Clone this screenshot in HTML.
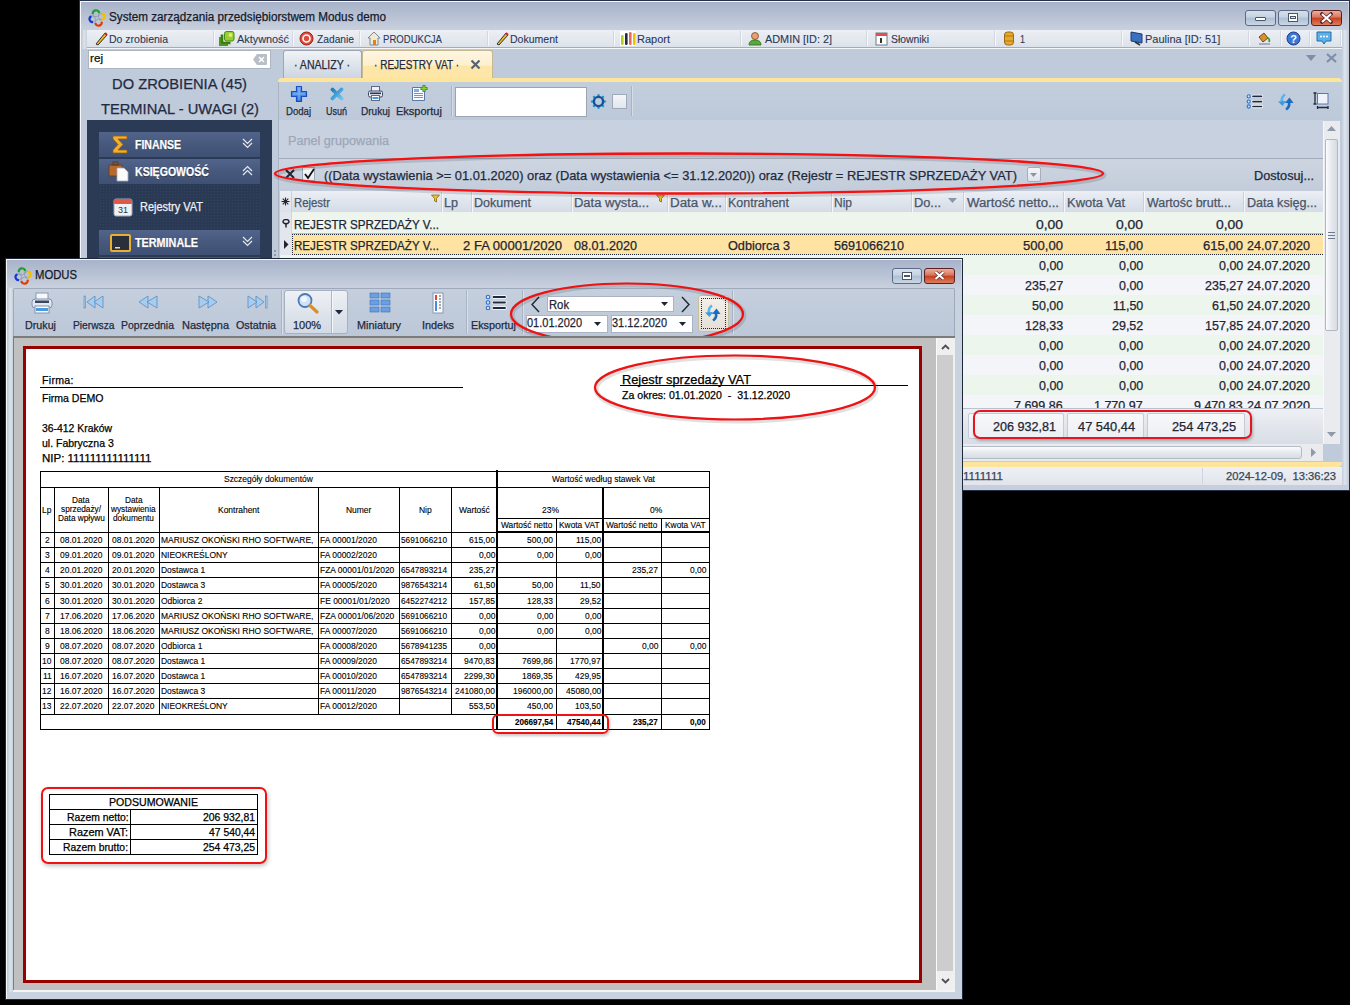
<!DOCTYPE html>
<html><head><meta charset="utf-8">
<style>
*{box-sizing:border-box;margin:0;padding:0}
html,body{width:1350px;height:1005px;overflow:hidden;background:#000}
body{position:relative;font-family:"Liberation Sans",sans-serif;color:#1e2533}
.a{position:absolute}
.t{position:absolute;white-space:pre;line-height:1;-webkit-text-stroke:0.25px currentColor}
.ui{font-size:12px;color:#1f2a3d}
.pg{font-family:"Liberation Sans",sans-serif;color:#000}
</style></head><body>
<div class="a" style="left:79px;top:0px;width:1271px;height:491px;background:#c6d0dd;border:1px solid #26304a;"></div>
<div class="a" style="left:80px;top:1px;width:1269px;height:489px;border-top:1px solid #f5f7fa;border-left:1px solid #f5f7fa;"></div>
<div class="a" style="left:81px;top:2px;width:1267px;height:28px;background:linear-gradient(#a7b2c9,#c9d1de);"></div>
<div class="a" style="left:1342px;top:30px;width:6px;height:455px;background:linear-gradient(90deg,#c5cedb,#dfe5ed 50%,#c5cedb);"></div>
<div class="a" style="left:81px;top:30px;width:6px;height:455px;background:linear-gradient(90deg,#bcc6d4,#dde3eb 55%,#c6cfdb);"></div>
<svg class="a" style="left:88px;top:8px" width="18" height="20"><circle cx="8" cy="5.5" r="3.3" fill="none" stroke="#7a8a96" stroke-width=".7" opacity=".8"/><circle cx="13.5" cy="8.5" r="3.0" fill="none" stroke="#7a8a96" stroke-width=".7" opacity=".8"/><circle cx="10.5" cy="14.5" r="3.3" fill="none" stroke="#7a8a96" stroke-width=".7" opacity=".8"/><circle cx="4.5" cy="11" r="3.0" fill="none" stroke="#7a8a96" stroke-width=".7" opacity=".8"/><path d="M4.75 6.07 A3.3 3.3 0 0 1 11.25 4.93" fill="none" stroke="#1aa030" stroke-width="2.2"/><path d="M14.02 5.55 A3.0 3.0 0 0 1 13.50 11.50" fill="none" stroke="#f2c000" stroke-width="2.2"/><path d="M13.75 13.93 A3.3 3.3 0 0 1 7.25 15.07" fill="none" stroke="#e83a00" stroke-width="2.2"/><path d="M5.02 13.95 A3.0 3.0 0 0 1 3.47 8.18" fill="none" stroke="#1438d8" stroke-width="2.2"/></svg>
<div class="t" style="left:109.00px;top:10.84px;font-size:12px;color:#15192a;font-weight:normal;transform:scaleX(0.9749);transform-origin:0 0;">System zarządzania przedsiębiorstwem Modus demo</div>
<div class="a" style="left:1245px;top:10px;width:31px;height:16px;border:1px solid #5b6b85;border-radius:3px;background:linear-gradient(#d6e0ec,#c4d2e2 45%,#aebfd4 50%,#c9d7e6);"></div>
<div class="a" style="left:1278px;top:10px;width:31px;height:16px;border:1px solid #5b6b85;border-radius:3px;background:linear-gradient(#d6e0ec,#c4d2e2 45%,#aebfd4 50%,#c9d7e6);"></div>
<div class="a" style="left:1311px;top:10px;width:31px;height:16px;border:1px solid #5a1f1f;border-radius:3px;background:linear-gradient(#eab0a0,#d9735c 45%,#c2401f 50%,#e07c5c);"></div>
<div class="a" style="left:1255px;top:17px;width:11px;height:4px;background:#fff;border:1px solid #4a5568;border-radius:1px;"></div>
<div class="a" style="left:1288px;top:13px;width:10px;height:9px;border:1px solid #4a5568;background:#fff;"></div>
<div class="a" style="left:1290px;top:16px;width:6px;height:3px;border:1px solid #4a5568;background:#dfe6ef;"></div>
<svg class="a" style="left:1320px;top:12px" width="13" height="12"><path d="M2 2 L11 10 M11 2 L2 10" stroke="#5a2a2a" stroke-width="3.6" stroke-linecap="square"/><path d="M2 2 L11 10 M11 2 L2 10" stroke="#fff" stroke-width="2.2"/></svg>
<div class="a" style="left:87px;top:30px;width:1255px;height:17px;background:linear-gradient(#eceff4,#dde2ea);"></div>
<div class="a" style="left:87px;top:47px;width:1255px;height:1px;background:#a3acb9;"></div>
<div class="a" style="left:87px;top:48px;width:1255px;height:1px;background:#f4f6f9;"></div>
<div class="a" style="left:214px;top:31px;width:1px;height:15px;background:#f7f8fa;"></div>
<div class="a" style="left:213px;top:31px;width:1px;height:15px;background:#d3d8e0;"></div>
<div class="a" style="left:293px;top:31px;width:1px;height:15px;background:#f7f8fa;"></div>
<div class="a" style="left:292px;top:31px;width:1px;height:15px;background:#d3d8e0;"></div>
<div class="a" style="left:360px;top:31px;width:1px;height:15px;background:#f7f8fa;"></div>
<div class="a" style="left:359px;top:31px;width:1px;height:15px;background:#d3d8e0;"></div>
<div class="a" style="left:488px;top:31px;width:1px;height:15px;background:#f7f8fa;"></div>
<div class="a" style="left:487px;top:31px;width:1px;height:15px;background:#d3d8e0;"></div>
<div class="a" style="left:614px;top:31px;width:1px;height:15px;background:#f7f8fa;"></div>
<div class="a" style="left:613px;top:31px;width:1px;height:15px;background:#d3d8e0;"></div>
<div class="a" style="left:741px;top:31px;width:1px;height:15px;background:#f7f8fa;"></div>
<div class="a" style="left:740px;top:31px;width:1px;height:15px;background:#d3d8e0;"></div>
<div class="a" style="left:867px;top:31px;width:1px;height:15px;background:#f7f8fa;"></div>
<div class="a" style="left:866px;top:31px;width:1px;height:15px;background:#d3d8e0;"></div>
<div class="a" style="left:995px;top:31px;width:1px;height:15px;background:#f7f8fa;"></div>
<div class="a" style="left:994px;top:31px;width:1px;height:15px;background:#d3d8e0;"></div>
<div class="a" style="left:1122px;top:31px;width:1px;height:15px;background:#f7f8fa;"></div>
<div class="a" style="left:1121px;top:31px;width:1px;height:15px;background:#d3d8e0;"></div>
<div class="a" style="left:1249px;top:31px;width:1px;height:15px;background:#f7f8fa;"></div>
<div class="a" style="left:1248px;top:31px;width:1px;height:15px;background:#d3d8e0;"></div>
<div class="a" style="left:1281px;top:31px;width:1px;height:15px;background:#f7f8fa;"></div>
<div class="a" style="left:1280px;top:31px;width:1px;height:15px;background:#d3d8e0;"></div>
<div class="a" style="left:1310px;top:31px;width:1px;height:15px;background:#f7f8fa;"></div>
<div class="a" style="left:1309px;top:31px;width:1px;height:15px;background:#d3d8e0;"></div>
<div class="a" style="left:1341px;top:31px;width:1px;height:15px;background:#f7f8fa;"></div>
<div class="a" style="left:1340px;top:31px;width:1px;height:15px;background:#d3d8e0;"></div>
<div class="t" style="left:109.00px;top:33.69px;font-size:11px;color:#2a3858;font-weight:normal;transform:scaleX(0.9554);transform-origin:0 0;-webkit-text-stroke:0.1px #2a3858;">Do zrobienia</div>
<div class="t" style="left:237.00px;top:33.69px;font-size:11px;color:#2a3858;font-weight:normal;transform:scaleX(0.9891);transform-origin:0 0;-webkit-text-stroke:0.1px #2a3858;">Aktywność</div>
<div class="t" style="left:317.00px;top:33.69px;font-size:11px;color:#2a3858;font-weight:normal;transform:scaleX(0.9309);transform-origin:0 0;-webkit-text-stroke:0.1px #2a3858;">Zadanie</div>
<div class="t" style="left:383.00px;top:33.69px;font-size:11px;color:#2a3858;font-weight:normal;transform:scaleX(0.8696);transform-origin:0 0;-webkit-text-stroke:0.1px #2a3858;">PRODUKCJA</div>
<div class="t" style="left:510.00px;top:33.69px;font-size:11px;color:#2a3858;font-weight:normal;transform:scaleX(0.9575);transform-origin:0 0;-webkit-text-stroke:0.1px #2a3858;">Dokument</div>
<div class="t" style="left:637.00px;top:33.69px;font-size:11px;color:#2a3858;font-weight:normal;-webkit-text-stroke:0.1px #2a3858;">Raport</div>
<div class="t" style="left:765.00px;top:33.69px;font-size:11px;color:#2a3858;font-weight:normal;transform:scaleX(0.9876);transform-origin:0 0;-webkit-text-stroke:0.1px #2a3858;">ADMIN [ID: 2]</div>
<div class="t" style="left:891.00px;top:33.69px;font-size:11px;color:#2a3858;font-weight:normal;transform:scaleX(0.9418);transform-origin:0 0;-webkit-text-stroke:0.1px #2a3858;">Słowniki</div>
<div class="t" style="left:1020.00px;top:33.69px;font-size:11px;color:#2a3858;font-weight:normal;transform:scaleX(0.8174);transform-origin:0 0;-webkit-text-stroke:0.1px #2a3858;">1</div>
<div class="t" style="left:1145.00px;top:33.69px;font-size:11px;color:#2a3858;font-weight:normal;-webkit-text-stroke:0.1px #2a3858;">Paulina [ID: 51]</div>
<svg class="a" style="left:94px;top:31px" width="14" height="15"><path d="M2 13 L11 2 L13 4 L4 14 Z" fill="#e8b820" stroke="#333" stroke-width="1"/><path d="M11 2 L13 4" stroke="#d02020" stroke-width="2"/></svg>
<svg class="a" style="left:495px;top:31px" width="14" height="15"><path d="M2 13 L11 2 L13 4 L4 14 Z" fill="#e8b820" stroke="#333" stroke-width="1"/><path d="M11 2 L13 4" stroke="#d02020" stroke-width="2"/></svg>
<svg class="a" style="left:219px;top:31px" width="16" height="15"><rect x="5.5" y="0.5" width="9.5" height="9.5" rx="2" fill="#9acd32" stroke="#4a8a1a"/><circle cx="11.5" cy="4" r="2" fill="#d8f070"/><path d="M3 3.5 V12 H11.5" fill="none" stroke="#3a7a12" stroke-width="2.6"/><path d="M1 6 V14 H9" fill="none" stroke="#4a9a1a" stroke-width="2.4"/></svg>
<svg class="a" style="left:299px;top:31px" width="15" height="15"><circle cx="7.5" cy="7.5" r="6.5" fill="#e04a3a" stroke="#a02010"/><circle cx="7.5" cy="7.5" r="3.5" fill="none" stroke="#fff" stroke-width="1.6"/></svg>
<svg class="a" style="left:367px;top:31px" width="14" height="15"><path d="M1 7 L7 1 L13 7 L11 7 L11 14 L3 14 L3 7 Z" fill="#f2ead0" stroke="#7a8a9a"/><rect x="6" y="9" width="3" height="5" fill="#e08020"/></svg>
<svg class="a" style="left:620px;top:31px" width="16" height="15"><rect x="0" y="0" width="16" height="15" fill="#fff"/><rect x="1" y="4" width="2.6" height="10" rx="1.2" fill="#b8cc20"/><rect x="5" y="2" width="2.6" height="12" rx="1.2" fill="#1f2a3d"/><rect x="9" y="1" width="2.6" height="13" rx="1.2" fill="#e86a5a"/><rect x="13" y="2" width="2.6" height="12" rx="1.2" fill="#f0c000"/></svg>
<svg class="a" style="left:748px;top:31px" width="14" height="15"><circle cx="7" cy="5" r="3.5" fill="#e8a070" stroke="#7a4a2a" stroke-width=".8"/><path d="M1 14 Q1 9 7 9 Q13 9 13 14 Z" fill="#5aaa3a" stroke="#2a6a1a" stroke-width=".8"/></svg>
<svg class="a" style="left:875px;top:31px" width="13" height="15"><rect x="1" y="2" width="11" height="12" fill="#fff" stroke="#6a7a8a"/><rect x="1" y="2" width="11" height="3" fill="#e05050"/><rect x="5" y="7" width="2" height="5" fill="#333"/></svg>
<svg class="a" style="left:1003px;top:31px" width="12" height="15"><rect x="1.5" y="1" width="9" height="13" rx="3" fill="#e8a830" stroke="#9a6a10"/><path d="M2 5 H10 M2 10 H10" stroke="#b07810"/></svg>
<svg class="a" style="left:1130px;top:31px" width="13" height="15"><path d="M1 1 L12 3 L12 12 L1 10 Z" fill="#3a70c0" stroke="#1a3a70"/><path d="M5 11 L10 14" stroke="#333" stroke-width="1.5"/></svg>
<svg class="a" style="left:1257px;top:30px" width="14" height="16"><path d="M2 7 L7 3 L11 8 L6 12 Z" fill="#d8902a" stroke="#7a4a10"/><path d="M11 8 Q13 9 12 12" stroke="#3aa020" stroke-width="1.8" fill="none"/><rect x="2" y="13" width="11" height="2" fill="#aab"/></svg>
<svg class="a" style="left:1286px;top:31px" width="15" height="15"><circle cx="7.5" cy="7.5" r="6.5" fill="#3a78d8" stroke="#1a3a8a"/><text x="7.5" y="11.5" font-size="11" font-weight="bold" fill="#fff" text-anchor="middle" font-family="Liberation Sans">?</text></svg>
<svg class="a" style="left:1316px;top:31px" width="16" height="15"><path d="M1 1 H15 V10 H10 L8 13 L6 10 H1 Z" fill="#5ab0e8" stroke="#2a6aa8"/><circle cx="5" cy="5.5" r="1" fill="#fff"/><circle cx="8" cy="5.5" r="1" fill="#fff"/><circle cx="11" cy="5.5" r="1" fill="#fff"/></svg>
<div class="a" style="left:81px;top:49px;width:197px;height:436px;background:#bfcada;"></div>
<div class="a" style="left:88px;top:50px;width:183px;height:19px;background:#fff;border:1px solid #abb5c4;"></div>
<div class="t" style="left:90.00px;top:53.27px;font-size:11.5px;color:#111;font-weight:normal;transform:scaleX(1.0172);transform-origin:0 0;">rej</div>
<svg class="a" style="left:252px;top:53px" width="16" height="13"><path d="M5 1 H14 Q15 1 15 2 V11 Q15 12 14 12 H5 L1 6.5 Z" fill="#b8bec8"/><path d="M7 4 L12 9 M12 4 L7 9" stroke="#fff" stroke-width="1.5"/></svg>
<div class="t" style="left:112.00px;top:76.30px;font-size:15px;color:#1f2a44;font-weight:normal;transform:scaleX(0.9816);transform-origin:0 0;">DO ZROBIENIA (45)</div>
<div class="t" style="left:101.00px;top:101.30px;font-size:15px;color:#1f2a44;font-weight:normal;transform:scaleX(0.9790);transform-origin:0 0;">TERMINAL - UWAGI (2)</div>
<div class="a" style="left:87px;top:120px;width:185px;height:140px;background:#2b3a55;"></div>
<div class="a" style="left:99px;top:132px;width:161px;height:25px;background:linear-gradient(#52648a,#46587c 50%,#3e5073);"></div>
<div class="t" style="left:135.00px;top:138.84px;font-size:12px;color:#ffffff;font-weight:bold;transform:scaleX(0.8734);transform-origin:0 0;text-shadow:0 1px 0 #1a2236;">FINANSE</div>
<div class="a" style="left:99px;top:159px;width:161px;height:25px;background:linear-gradient(#52648a,#46587c 50%,#3e5073);"></div>
<div class="t" style="left:135.00px;top:165.84px;font-size:12px;color:#ffffff;font-weight:bold;transform:scaleX(0.8809);transform-origin:0 0;text-shadow:0 1px 0 #1a2236;">KSIĘGOWOŚĆ</div>
<div class="a" style="left:99px;top:230px;width:161px;height:25px;background:linear-gradient(#52648a,#46587c 50%,#3e5073);"></div>
<div class="t" style="left:135.00px;top:236.84px;font-size:12px;color:#ffffff;font-weight:bold;transform:scaleX(0.9000);transform-origin:0 0;text-shadow:0 1px 0 #1a2236;">TERMINALE</div>
<div class="a" style="left:99px;top:257px;width:161px;height:3px;background:#44567a;"></div>
<svg class="a" style="left:242px;top:138px" width="11" height="11"><path d="M1 1 L5.5 5.5 L10 1 M1 5 L5.5 9.5 L10 5" fill="none" stroke="#e4e9f1" stroke-width="1.2"/></svg>
<svg class="a" style="left:242px;top:165px" width="11" height="11"><path d="M1 6 L5.5 1.5 L10 6 M1 10 L5.5 5.5 L10 10" fill="none" stroke="#e4e9f1" stroke-width="1.2"/></svg>
<svg class="a" style="left:242px;top:236px" width="11" height="11"><path d="M1 1 L5.5 5.5 L10 1 M1 5 L5.5 9.5 L10 5" fill="none" stroke="#e4e9f1" stroke-width="1.2"/></svg>
<svg class="a" style="left:111px;top:134px" width="18" height="21"><path d="M2 2 H16 V5 H7 L12 10.5 L7 16 H16 V19 H2 V16 L7 10.5 L2 5 Z" fill="#f0b030" stroke="#9a6010" stroke-width=".8"/></svg>
<svg class="a" style="left:108px;top:160px" width="22" height="22"><rect x="1" y="5" width="13" height="11" rx="1" fill="#b86a2a" stroke="#6a3a10" stroke-width=".8"/><rect x="5" y="2" width="5" height="3" fill="none" stroke="#6a3a10"/><path d="M9 8 H16 L20 12 V21 H9 Z" fill="#fafafa" stroke="#aab" stroke-width=".8"/></svg>
<div class="a" style="left:99px;top:184px;width:161px;height:45px;background-color:#2a3954;background-image:radial-gradient(#34445f 0.6px,transparent 0.8px);background-size:3px 3px;"></div>
<svg class="a" style="left:113px;top:196px" width="20" height="21"><rect x="1" y="3" width="18" height="17" rx="2" fill="#eef2f7" stroke="#9aa8bc"/><rect x="1" y="3" width="18" height="5" rx="1" fill="#e05a4a"/><text x="10" y="17" font-size="9" font-family="Liberation Sans" fill="#333" text-anchor="middle">31</text></svg>
<div class="t" style="left:140.00px;top:200.84px;font-size:12px;color:#eef1f6;font-weight:normal;transform:scaleX(0.9143);transform-origin:0 0;">Rejestry VAT</div>
<svg class="a" style="left:110px;top:234px" width="21" height="19"><rect x="1" y="1" width="19" height="16" rx="1" fill="#2a2f3a" stroke="#e8b030" stroke-width="2"/><rect x="5" y="13" width="5" height="1.5" fill="#ddd"/></svg>
<div class="a" style="left:274px;top:250px;width:2px;height:2px;background:#8d99ab;"></div>
<div class="a" style="left:274px;top:254px;width:2px;height:2px;background:#8d99ab;"></div>
<div class="a" style="left:278px;top:49px;width:1064px;height:436px;background:#bfcadb;"></div>
<div class="a" style="left:283px;top:50px;width:79px;height:28px;border:1px solid #9ba6b6;border-bottom:none;border-radius:3px 3px 0 0;background:linear-gradient(#f0f3f7,#dde3eb 55%,#cdd5e1);"></div>
<div class="t" style="left:294.00px;top:58.84px;font-size:12px;color:#1f2a3d;font-weight:normal;transform:scaleX(0.8777);transform-origin:0 0;">· ANALIZY ·</div>
<div class="a" style="left:362px;top:50px;width:131px;height:29px;border:1px solid #c8b890;border-bottom:none;border-radius:3px 3px 0 0;background:linear-gradient(#fdf6e2,#fdf0cf 50%,#fde6a8 55%,#fde6a8);"></div>
<div class="t" style="left:374.00px;top:58.84px;font-size:12px;color:#1f2a3d;font-weight:normal;transform:scaleX(0.8368);transform-origin:0 0;">· REJESTRY VAT ·</div>
<svg class="a" style="left:470px;top:59px" width="11" height="11"><path d="M1.5 1.5 L9.5 9.5 M9.5 1.5 L1.5 9.5" stroke="#5a6270" stroke-width="2.2"/></svg>
<svg class="a" style="left:1306px;top:55px" width="11" height="7"><path d="M0 0 H10 L5 6 Z" fill="#7f8da6"/></svg>
<svg class="a" style="left:1326px;top:53px" width="11" height="10"><path d="M1 1 L10 9 M10 1 L1 9" stroke="#7f8da6" stroke-width="2.2"/></svg>
<div class="a" style="left:278px;top:78px;width:1064px;height:5px;background:#fde59b;border-radius:4px 4px 0 0;"></div>
<div class="a" style="left:278px;top:462px;width:1064px;height:5px;background:#fde59b;border-radius:0 0 4px 4px;"></div>
<div class="a" style="left:278px;top:82px;width:1064px;height:38px;background:linear-gradient(#c3cedd,#bdc8d9);"></div>
<div class="a" style="left:278px;top:82px;width:1px;height:380px;background:#aab4c3;"></div>
<svg class="a" style="left:290px;top:85px" width="18" height="18"><defs><linearGradient id="gp" x1="0" y1="0" x2="0" y2="1"><stop offset="0" stop-color="#6aaaf0"/><stop offset="1" stop-color="#2f6fd8"/></linearGradient></defs><path d="M6.5 1.5 H11.5 V6.5 H16.5 V11.5 H11.5 V16.5 H6.5 V11.5 H1.5 V6.5 H6.5 Z" fill="url(#gp)" stroke="#1a4ec0" stroke-width="1.2" stroke-linejoin="round"/><path d="M9 3 V15 M3 9 H15" stroke="#9fd0ff" stroke-width="1" opacity=".7"/></svg>
<svg class="a" style="left:330px;top:87px" width="14" height="14"><defs><linearGradient id="gx" x1="0" y1="0" x2="1" y2="1"><stop offset="0" stop-color="#1f7fc0"/><stop offset="1" stop-color="#6cc4f0"/></linearGradient></defs><path d="M2.5 2.5 L11.5 11.5 M11.5 2.5 L2.5 11.5" stroke="url(#gx)" stroke-width="3.8" stroke-linecap="round"/></svg>
<svg class="a" style="left:368px;top:86px" width="15" height="15"><rect x="3.5" y="0.5" width="8" height="5" fill="#eef2f8" stroke="#5a6a88"/><rect x="0.5" y="5" width="14" height="6" rx="1.5" fill="#e6ebf2" stroke="#3a4866"/><rect x="2" y="6.5" width="11" height="1.6" fill="#2a3550"/><rect x="3.5" y="9.5" width="8" height="5" fill="#fff" stroke="#5a6a88"/><rect x="4.5" y="11" width="6" height="2" fill="#4a9ae0"/></svg>
<svg class="a" style="left:411px;top:84px" width="18" height="18"><path d="M1.5 3.5 H11 L13.5 6 V16.5 H1.5 Z" fill="#fafcff" stroke="#5a78a8"/><rect x="3" y="5" width="5" height="3" fill="#7ab0e8"/><path d="M3 9.5 H12 M3 11.5 H12 M3 13.5 H12" stroke="#6a88b8" stroke-width=".9"/><path d="M13 1 V8 M9.5 4.5 H16.5" stroke="#3a8a20" stroke-width="3"/><path d="M13 1.8 V7.2 M10.3 4.5 H15.7" stroke="#8ad040" stroke-width="1.4"/></svg>
<div class="t" style="left:286.00px;top:105.69px;font-size:11px;color:#1f2a3d;font-weight:normal;transform:scaleX(0.8699);transform-origin:0 0;">Dodaj</div>
<div class="t" style="left:326.00px;top:105.69px;font-size:11px;color:#1f2a3d;font-weight:normal;transform:scaleX(0.8178);transform-origin:0 0;">Usuń</div>
<div class="t" style="left:361.00px;top:105.69px;font-size:11px;color:#1f2a3d;font-weight:normal;transform:scaleX(0.9124);transform-origin:0 0;">Drukuj</div>
<div class="t" style="left:396.00px;top:105.69px;font-size:11px;color:#1f2a3d;font-weight:normal;">Eksportuj</div>
<div class="a" style="left:451px;top:86px;width:1px;height:30px;background:#a8b3c3;"></div>
<div class="a" style="left:452px;top:86px;width:1px;height:30px;background:#d6dde7;"></div>
<div class="a" style="left:455px;top:87px;width:132px;height:30px;background:#fff;border:1px solid #9aa4b3;"></div>
<svg class="a" style="left:590px;top:93px" width="17" height="17"><g fill="#1f9fd0"><circle cx="14.80" cy="8.50" r="1.3"/><circle cx="12.95" cy="12.95" r="1.3"/><circle cx="8.50" cy="14.80" r="1.3"/><circle cx="4.05" cy="12.95" r="1.3"/><circle cx="2.20" cy="8.50" r="1.3"/><circle cx="4.05" cy="4.05" r="1.3"/><circle cx="8.50" cy="2.20" r="1.3"/><circle cx="12.95" cy="4.05" r="1.3"/></g><circle cx="8.5" cy="8.5" r="4.6" fill="none" stroke="#1a4f9a" stroke-width="2.4"/></svg>
<div class="a" style="left:612px;top:94px;width:15px;height:15px;background:linear-gradient(#f4f6f9,#e1e6ee);border:1px solid #a0a9b8;"></div>
<div class="a" style="left:631px;top:86px;width:1px;height:30px;background:#a8b3c3;"></div>
<div class="a" style="left:632px;top:86px;width:1px;height:30px;background:#d6dde7;"></div>
<svg class="a" style="left:1244px;top:92px" width="20" height="18"><g stroke="#fff" stroke-width="3.4" stroke-linecap="round"><path d="M9 4.4 H17.5 M9 9.6 H17.5 M9 14.5 H17.5"/></g><g stroke="#1f2a3d" stroke-width="1.7" stroke-linecap="round"><path d="M9 4.4 H17.5 M9 9.6 H17.5 M9 14.5 H17.5"/></g><g fill="#cfe3f8" stroke="#2f6fc8" stroke-width="1.1"><circle cx="4.7" cy="4.4" r="1.6"/><circle cx="4.7" cy="9.6" r="1.6"/><circle cx="4.7" cy="14.5" r="1.6"/></g></svg>
<svg class="a" style="left:1277px;top:93px" width="18" height="18"><path d="M8 1.5 Q4 4 5 9" fill="none" stroke="#5ab4ee" stroke-width="2.6"/><path d="M1 8.5 L9 8 L5.5 13 Z" fill="#3a9ae6"/><path d="M9 16.5 Q13 14 12 9" fill="none" stroke="#1a6ac4" stroke-width="2.6"/><path d="M8 10 L12.5 4.5 L16.5 10 Z" fill="#1a6ac4"/></svg>
<svg class="a" style="left:1312px;top:92px" width="18" height="18"><path d="M1.5 1 H4.5 M3 1 V12 M1.5 12 H4.5" stroke="#1f2a3d" stroke-width="1.3"/><rect x="5.5" y="1.5" width="10.5" height="10.5" fill="#eef3fb" stroke="#5a78b8" stroke-width="1"/><path d="M5.5 15.5 H16 M5.5 14 V17 M16 14 V17" stroke="#1f2a3d" stroke-width="1.3"/></svg>
<div class="a" style="left:279px;top:120px;width:1044px;height:38px;background:#c8d1df;"></div>
<div class="t" style="left:288.00px;top:134.84px;font-size:12px;color:#9ca7b9;font-weight:normal;transform:scaleX(1.0513);transform-origin:0 0;">Panel grupowania</div>
<div class="a" style="left:279px;top:158px;width:1044px;height:1px;background:#9fa9b8;"></div>
<div class="a" style="left:279px;top:159px;width:1044px;height:32px;background:linear-gradient(#cdd5e1,#c3ccda);"></div>
<svg class="a" style="left:285px;top:169px" width="10" height="10"><path d="M1 1 L9 9 M9 1 L1 9" stroke="#1f2533" stroke-width="2"/></svg>
<div class="a" style="left:302px;top:167px;width:13px;height:14px;background:linear-gradient(#fafbfc,#e4e8ee);border:1px solid #9da6b4;"></div>
<svg class="a" style="left:303px;top:168px" width="12" height="12"><path d="M2 6 L5 10 L11 1" fill="none" stroke="#111" stroke-width="1.8"/></svg>
<div class="t" style="left:324.00px;top:169.00px;font-size:13px;color:#1f2a3d;font-weight:normal;transform:scaleX(0.9893);transform-origin:0 0;">((Data wystawienia &gt;= 01.01.2020) oraz (Data wystawienia &lt;= 31.12.2020)) oraz (Rejestr = REJESTR SPRZEDAŻY VAT)</div>
<div class="a" style="left:1027px;top:167px;width:14px;height:15px;background:linear-gradient(#f3f5f8,#dfe4eb);border:1px solid #a6aebb;border-radius:2px;"></div>
<svg class="a" style="left:1030px;top:173px" width="8" height="5"><path d="M0 0 H7 L3.5 4 Z" fill="#8a94a4"/></svg>
<div class="t" style="left:1254.00px;top:169.84px;font-size:12px;color:#1f2a3d;font-weight:normal;transform:scaleX(1.0584);transform-origin:0 0;">Dostosuj...</div>
<div class="a" style="left:280px;top:191px;width:1043px;height:21px;background:linear-gradient(#eceff4,#dfe5ed 50%,#d5dce7);"></div>
<div class="a" style="left:280px;top:191px;width:11px;height:21px;background:linear-gradient(#eceff3,#dde2ea);"></div>
<div class="a" style="left:291px;top:191px;width:1px;height:21px;background:#c9d0db;"></div>
<svg class="a" style="left:281px;top:197px" width="9" height="9"><path d="M4.5 0.5 V8.5 M0.5 4.5 H8.5 M1.7 1.7 L7.3 7.3 M7.3 1.7 L1.7 7.3" stroke="#1f2533" stroke-width="1.1"/></svg>
<div class="a" style="left:442px;top:192px;width:1px;height:20px;background:#f5f7fa;"></div>
<div class="a" style="left:441px;top:192px;width:1px;height:20px;background:#c8d0dc;"></div>
<div class="a" style="left:472px;top:192px;width:1px;height:20px;background:#f5f7fa;"></div>
<div class="a" style="left:471px;top:192px;width:1px;height:20px;background:#c8d0dc;"></div>
<div class="a" style="left:572px;top:192px;width:1px;height:20px;background:#f5f7fa;"></div>
<div class="a" style="left:571px;top:192px;width:1px;height:20px;background:#c8d0dc;"></div>
<div class="a" style="left:668px;top:192px;width:1px;height:20px;background:#f5f7fa;"></div>
<div class="a" style="left:667px;top:192px;width:1px;height:20px;background:#c8d0dc;"></div>
<div class="a" style="left:726px;top:192px;width:1px;height:20px;background:#f5f7fa;"></div>
<div class="a" style="left:725px;top:192px;width:1px;height:20px;background:#c8d0dc;"></div>
<div class="a" style="left:832px;top:192px;width:1px;height:20px;background:#f5f7fa;"></div>
<div class="a" style="left:831px;top:192px;width:1px;height:20px;background:#c8d0dc;"></div>
<div class="a" style="left:912px;top:192px;width:1px;height:20px;background:#f5f7fa;"></div>
<div class="a" style="left:911px;top:192px;width:1px;height:20px;background:#c8d0dc;"></div>
<div class="a" style="left:964px;top:192px;width:1px;height:20px;background:#f5f7fa;"></div>
<div class="a" style="left:963px;top:192px;width:1px;height:20px;background:#c8d0dc;"></div>
<div class="a" style="left:1064px;top:192px;width:1px;height:20px;background:#f5f7fa;"></div>
<div class="a" style="left:1063px;top:192px;width:1px;height:20px;background:#c8d0dc;"></div>
<div class="a" style="left:1144px;top:192px;width:1px;height:20px;background:#f5f7fa;"></div>
<div class="a" style="left:1143px;top:192px;width:1px;height:20px;background:#c8d0dc;"></div>
<div class="a" style="left:1244px;top:192px;width:1px;height:20px;background:#f5f7fa;"></div>
<div class="a" style="left:1243px;top:192px;width:1px;height:20px;background:#c8d0dc;"></div>
<div class="t" style="left:294.00px;top:196.84px;font-size:12px;color:#4a5568;font-weight:normal;transform:scaleX(0.9471);transform-origin:0 0;">Rejestr</div>
<div class="t" style="left:444.00px;top:196.84px;font-size:12px;color:#4a5568;font-weight:normal;transform:scaleX(1.0489);transform-origin:0 0;">Lp</div>
<div class="t" style="left:474.00px;top:196.84px;font-size:12px;color:#4a5568;font-weight:normal;transform:scaleX(1.0422);transform-origin:0 0;">Dokument</div>
<div class="t" style="left:574.00px;top:196.84px;font-size:12px;color:#4a5568;font-weight:normal;transform:scaleX(1.0813);transform-origin:0 0;">Data wysta...</div>
<div class="t" style="left:670.00px;top:196.84px;font-size:12px;color:#4a5568;font-weight:normal;transform:scaleX(1.1138);transform-origin:0 0;">Data w...</div>
<div class="t" style="left:728.00px;top:196.84px;font-size:12px;color:#4a5568;font-weight:normal;transform:scaleX(1.0390);transform-origin:0 0;">Kontrahent</div>
<div class="t" style="left:834.00px;top:196.84px;font-size:12px;color:#4a5568;font-weight:normal;">Nip</div>
<div class="t" style="left:914.00px;top:196.84px;font-size:12px;color:#4a5568;font-weight:normal;transform:scaleX(1.0654);transform-origin:0 0;">Do...</div>
<div class="t" style="left:967.00px;top:196.84px;font-size:12px;color:#4a5568;font-weight:normal;transform:scaleX(1.1007);transform-origin:0 0;">Wartość netto...</div>
<div class="t" style="left:1067.00px;top:196.84px;font-size:12px;color:#4a5568;font-weight:normal;transform:scaleX(1.0779);transform-origin:0 0;">Kwota Vat</div>
<div class="t" style="left:1147.00px;top:196.84px;font-size:12px;color:#4a5568;font-weight:normal;transform:scaleX(1.0382);transform-origin:0 0;">Wartośc brutt...</div>
<div class="t" style="left:1247.00px;top:196.84px;font-size:12px;color:#4a5568;font-weight:normal;transform:scaleX(1.0495);transform-origin:0 0;">Data księg...</div>
<svg class="a" style="left:431px;top:194px" width="9" height="9"><path d="M0.5 1 H8.5 L5.5 4.5 V8 L3.5 7 V4.5 Z" fill="#e8c030" stroke="#8a6a10" stroke-width=".8"/></svg>
<svg class="a" style="left:656px;top:194px" width="9" height="9"><path d="M0.5 1 H8.5 L5.5 4.5 V8 L3.5 7 V4.5 Z" fill="#e8c030" stroke="#8a6a10" stroke-width=".8"/></svg>
<svg class="a" style="left:948px;top:198px" width="10" height="6"><path d="M0 0 H9 L4.5 5 Z" fill="#8a96a8"/></svg>
<div class="a" style="left:280px;top:212px;width:1043px;height:22px;background:#edf5ec;"></div>
<div class="a" style="left:280px;top:212px;width:11px;height:22px;background:#e3e7ed;"></div>
<div class="a" style="left:291px;top:212px;width:1px;height:43px;background:#d0d6df;"></div>
<div class="a" style="left:292px;top:233px;width:1031px;height:1px;background:#b8c0cc;"></div>
<svg class="a" style="left:282px;top:219px" width="8" height="9"><ellipse cx="4" cy="2.6" rx="3" ry="2.1" fill="none" stroke="#1f2533" stroke-width="1.4"/><path d="M4 4.5 V8.5" stroke="#1f2533" stroke-width="1.5"/></svg>
<div class="t" style="left:294.00px;top:218.84px;font-size:12px;color:#1f2533;font-weight:normal;transform:scaleX(0.9664);transform-origin:0 0;">REJESTR SPRZEDAŻY V...</div>
<div class="t" style="left:1036.00px;top:218.84px;font-size:12px;color:#1f2533;font-weight:normal;transform:scaleX(1.1561);transform-origin:0 0;">0,00</div>
<div class="t" style="left:1116.00px;top:218.84px;font-size:12px;color:#1f2533;font-weight:normal;transform:scaleX(1.1561);transform-origin:0 0;">0,00</div>
<div class="t" style="left:1216.00px;top:218.84px;font-size:12px;color:#1f2533;font-weight:normal;transform:scaleX(1.1561);transform-origin:0 0;">0,00</div>
<div class="a" style="left:280px;top:234px;width:1043px;height:21px;background:#fee3a3;"></div>
<div class="a" style="left:280px;top:234px;width:11px;height:21px;background:#e3e7ed;"></div>
<div class="a" style="left:292px;top:234px;width:1031px;height:1px;background-image:linear-gradient(90deg,#1f2533 50%,transparent 50%);background-size:2px 1px;"></div>
<div class="a" style="left:292px;top:254px;width:1031px;height:1px;background-image:linear-gradient(90deg,#1f2533 50%,transparent 50%);background-size:2px 1px;"></div>
<div class="a" style="left:292px;top:234px;width:1px;height:21px;background-image:linear-gradient(#1f2533 50%,transparent 50%);background-size:1px 2px;"></div>
<svg class="a" style="left:284px;top:240px" width="5" height="9"><path d="M0 0 L4.5 4.5 L0 9 Z" fill="#1f2533"/></svg>
<div class="t" style="left:294.00px;top:239.84px;font-size:12px;color:#1f2533;font-weight:normal;transform:scaleX(0.9664);transform-origin:0 0;">REJESTR SPRZEDAŻY V...</div>
<div class="t" style="left:463.00px;top:239.84px;font-size:12px;color:#1f2533;font-weight:normal;transform:scaleX(1.0909);transform-origin:0 0;">2 FA 00001/2020</div>
<div class="t" style="left:574.00px;top:239.84px;font-size:12px;color:#1f2533;font-weight:normal;transform:scaleX(1.0490);transform-origin:0 0;">08.01.2020</div>
<div class="t" style="left:728.00px;top:239.84px;font-size:12px;color:#1f2533;font-weight:normal;transform:scaleX(1.0562);transform-origin:0 0;">Odbiorca 3</div>
<div class="t" style="left:834.00px;top:239.84px;font-size:12px;color:#1f2533;font-weight:normal;transform:scaleX(1.0489);transform-origin:0 0;">5691066210</div>
<div class="t" style="left:1023.00px;top:239.84px;font-size:12px;color:#1f2533;font-weight:normal;transform:scaleX(1.0899);transform-origin:0 0;">500,00</div>
<div class="t" style="left:1105.00px;top:239.84px;font-size:12px;color:#1f2533;font-weight:normal;transform:scaleX(1.0611);transform-origin:0 0;">115,00</div>
<div class="t" style="left:1203.00px;top:239.84px;font-size:12px;color:#1f2533;font-weight:normal;transform:scaleX(1.0899);transform-origin:0 0;">615,00</div>
<div class="t" style="left:1247.00px;top:239.84px;font-size:12px;color:#1f2533;font-weight:normal;transform:scaleX(1.0490);transform-origin:0 0;">24.07.2020</div>
<div class="a" style="left:280px;top:255px;width:1043px;height:20px;background:#edf6ec;"></div>
<div class="t" style="left:1038.71px;top:259.84px;font-size:12px;color:#1f2533;font-weight:normal;transform:scaleX(1.0400);transform-origin:0 0;">0,00</div>
<div class="t" style="left:1118.71px;top:259.84px;font-size:12px;color:#1f2533;font-weight:normal;transform:scaleX(1.0400);transform-origin:0 0;">0,00</div>
<div class="t" style="left:1218.71px;top:259.84px;font-size:12px;color:#1f2533;font-weight:normal;transform:scaleX(1.0400);transform-origin:0 0;">0,00</div>
<div class="t" style="left:1247.00px;top:259.84px;font-size:12px;color:#1f2533;font-weight:normal;transform:scaleX(1.0490);transform-origin:0 0;">24.07.2020</div>
<div class="a" style="left:280px;top:275px;width:1043px;height:20px;background:#f4f5f8;"></div>
<div class="t" style="left:1024.83px;top:279.84px;font-size:12px;color:#1f2533;font-weight:normal;transform:scaleX(1.0400);transform-origin:0 0;">235,27</div>
<div class="t" style="left:1118.71px;top:279.84px;font-size:12px;color:#1f2533;font-weight:normal;transform:scaleX(1.0400);transform-origin:0 0;">0,00</div>
<div class="t" style="left:1204.83px;top:279.84px;font-size:12px;color:#1f2533;font-weight:normal;transform:scaleX(1.0400);transform-origin:0 0;">235,27</div>
<div class="t" style="left:1247.00px;top:279.84px;font-size:12px;color:#1f2533;font-weight:normal;transform:scaleX(1.0490);transform-origin:0 0;">24.07.2020</div>
<div class="a" style="left:280px;top:295px;width:1043px;height:20px;background:#edf6ec;"></div>
<div class="t" style="left:1031.77px;top:299.84px;font-size:12px;color:#1f2533;font-weight:normal;transform:scaleX(1.0400);transform-origin:0 0;">50,00</div>
<div class="t" style="left:1112.70px;top:299.84px;font-size:12px;color:#1f2533;font-weight:normal;transform:scaleX(1.0400);transform-origin:0 0;">11,50</div>
<div class="t" style="left:1211.77px;top:299.84px;font-size:12px;color:#1f2533;font-weight:normal;transform:scaleX(1.0400);transform-origin:0 0;">61,50</div>
<div class="t" style="left:1247.00px;top:299.84px;font-size:12px;color:#1f2533;font-weight:normal;transform:scaleX(1.0490);transform-origin:0 0;">24.07.2020</div>
<div class="a" style="left:280px;top:315px;width:1043px;height:20px;background:#f4f5f8;"></div>
<div class="t" style="left:1024.83px;top:319.84px;font-size:12px;color:#1f2533;font-weight:normal;transform:scaleX(1.0400);transform-origin:0 0;">128,33</div>
<div class="t" style="left:1111.77px;top:319.84px;font-size:12px;color:#1f2533;font-weight:normal;transform:scaleX(1.0400);transform-origin:0 0;">29,52</div>
<div class="t" style="left:1204.83px;top:319.84px;font-size:12px;color:#1f2533;font-weight:normal;transform:scaleX(1.0400);transform-origin:0 0;">157,85</div>
<div class="t" style="left:1247.00px;top:319.84px;font-size:12px;color:#1f2533;font-weight:normal;transform:scaleX(1.0490);transform-origin:0 0;">24.07.2020</div>
<div class="a" style="left:280px;top:335px;width:1043px;height:20px;background:#edf6ec;"></div>
<div class="t" style="left:1038.71px;top:339.84px;font-size:12px;color:#1f2533;font-weight:normal;transform:scaleX(1.0400);transform-origin:0 0;">0,00</div>
<div class="t" style="left:1118.71px;top:339.84px;font-size:12px;color:#1f2533;font-weight:normal;transform:scaleX(1.0400);transform-origin:0 0;">0,00</div>
<div class="t" style="left:1218.71px;top:339.84px;font-size:12px;color:#1f2533;font-weight:normal;transform:scaleX(1.0400);transform-origin:0 0;">0,00</div>
<div class="t" style="left:1247.00px;top:339.84px;font-size:12px;color:#1f2533;font-weight:normal;transform:scaleX(1.0490);transform-origin:0 0;">24.07.2020</div>
<div class="a" style="left:280px;top:355px;width:1043px;height:20px;background:#f4f5f8;"></div>
<div class="t" style="left:1038.71px;top:359.84px;font-size:12px;color:#1f2533;font-weight:normal;transform:scaleX(1.0400);transform-origin:0 0;">0,00</div>
<div class="t" style="left:1118.71px;top:359.84px;font-size:12px;color:#1f2533;font-weight:normal;transform:scaleX(1.0400);transform-origin:0 0;">0,00</div>
<div class="t" style="left:1218.71px;top:359.84px;font-size:12px;color:#1f2533;font-weight:normal;transform:scaleX(1.0400);transform-origin:0 0;">0,00</div>
<div class="t" style="left:1247.00px;top:359.84px;font-size:12px;color:#1f2533;font-weight:normal;transform:scaleX(1.0490);transform-origin:0 0;">24.07.2020</div>
<div class="a" style="left:280px;top:375px;width:1043px;height:20px;background:#edf6ec;"></div>
<div class="t" style="left:1038.71px;top:379.84px;font-size:12px;color:#1f2533;font-weight:normal;transform:scaleX(1.0400);transform-origin:0 0;">0,00</div>
<div class="t" style="left:1118.71px;top:379.84px;font-size:12px;color:#1f2533;font-weight:normal;transform:scaleX(1.0400);transform-origin:0 0;">0,00</div>
<div class="t" style="left:1218.71px;top:379.84px;font-size:12px;color:#1f2533;font-weight:normal;transform:scaleX(1.0400);transform-origin:0 0;">0,00</div>
<div class="t" style="left:1247.00px;top:379.84px;font-size:12px;color:#1f2533;font-weight:normal;transform:scaleX(1.0490);transform-origin:0 0;">24.07.2020</div>
<div class="a" style="left:280px;top:395px;width:1043px;height:13px;background:#f4f5f8;"></div>
<div class="t" style="left:1014.42px;top:399.84px;font-size:12px;color:#1f2533;font-weight:normal;transform:scaleX(1.0400);transform-origin:0 0;">7 699,86</div>
<div class="t" style="left:1094.42px;top:399.84px;font-size:12px;color:#1f2533;font-weight:normal;transform:scaleX(1.0400);transform-origin:0 0;">1 770,97</div>
<div class="t" style="left:1194.42px;top:399.84px;font-size:12px;color:#1f2533;font-weight:normal;transform:scaleX(1.0400);transform-origin:0 0;">9 470,83</div>
<div class="t" style="left:1247.00px;top:399.84px;font-size:12px;color:#1f2533;font-weight:normal;transform:scaleX(1.0490);transform-origin:0 0;">24.07.2020</div>
<div class="a" style="left:280px;top:408px;width:1043px;height:36px;background:linear-gradient(#eef0f4,#e2e6ec 50%,#d9dee6);border-top:1px solid #b9c2cf;"></div>
<div class="a" style="left:968px;top:413px;width:96px;height:26px;background:linear-gradient(#f7f8fa,#eceff3);border:1px solid #c4cbd6;border-radius:2px;"></div>
<div class="a" style="left:1067px;top:413px;width:77px;height:26px;background:linear-gradient(#f7f8fa,#eceff3);border:1px solid #c4cbd6;border-radius:2px;"></div>
<div class="a" style="left:1147px;top:413px;width:98px;height:26px;background:linear-gradient(#f7f8fa,#eceff3);border:1px solid #c4cbd6;border-radius:2px;"></div>
<div class="t" style="left:993.00px;top:420.84px;font-size:12px;color:#1f2533;font-weight:normal;transform:scaleX(1.0490);transform-origin:0 0;">206 932,81</div>
<div class="t" style="left:1078.00px;top:420.84px;font-size:12px;color:#1f2533;font-weight:normal;transform:scaleX(1.0678);transform-origin:0 0;">47 540,44</div>
<div class="t" style="left:1172.00px;top:420.84px;font-size:12px;color:#1f2533;font-weight:normal;transform:scaleX(1.0657);transform-origin:0 0;">254 473,25</div>
<div class="a" style="left:973px;top:410px;width:279px;height:29px;border:2px solid #e8141e;border-radius:7px;box-shadow:1px 2px 3px rgba(0,0,0,.25);"></div>
<svg class="a" style="left:265px;top:145px" width="850" height="60"><ellipse cx="424" cy="28.5" rx="414" ry="20" fill="none" stroke="rgba(0,0,0,.13)" stroke-width="5" transform="translate(1,1.5)"/><ellipse cx="424" cy="28.5" rx="414" ry="20" fill="none" stroke="#f81010" stroke-width="2.3"/></svg>
<div class="a" style="left:1323px;top:121px;width:17px;height:323px;background:#e9ebef;border-left:1px solid #f7f8fa;"></div>
<svg class="a" style="left:1327px;top:126px" width="9" height="5"><path d="M0 5 L4.5 0 L9 5 Z" fill="#8f99a8"/></svg>
<div class="a" style="left:1325px;top:139px;width:13px;height:192px;background:linear-gradient(90deg,#fdfdfe,#e9ecf1 40%,#d6dbe3);border:1px solid #b0b8c5;border-radius:2px;"></div>
<div class="a" style="left:1328px;top:232px;width:7px;height:1px;background:#6f7a8c;"></div>
<div class="a" style="left:1328px;top:235px;width:7px;height:1px;background:#6f7a8c;"></div>
<div class="a" style="left:1328px;top:238px;width:7px;height:1px;background:#6f7a8c;"></div>
<svg class="a" style="left:1327px;top:432px" width="9" height="5"><path d="M0 0 L4.5 5 L9 0 Z" fill="#8f99a8"/></svg>
<div class="a" style="left:280px;top:444px;width:1043px;height:17px;background:#e9ebef;"></div>
<div class="a" style="left:282px;top:446px;width:1020px;height:13px;background:linear-gradient(#fbfcfd,#e6e9ee 50%,#d8dde5);border:1px solid #b3bbc7;border-radius:3px;"></div>
<svg class="a" style="left:1311px;top:448px" width="5" height="9"><path d="M0 0 L5 4.5 L0 9 Z" fill="#8f99a8"/></svg>
<div class="a" style="left:1323px;top:444px;width:17px;height:17px;background:#bfcada;"></div>
<div class="a" style="left:81px;top:467px;width:1261px;height:18px;background:linear-gradient(#eef0f4,#e1e5eb);"></div>
<div class="a" style="left:1202px;top:468px;width:1px;height:16px;background:#cfd5de;"></div>
<div class="t" style="left:963.00px;top:470.69px;font-size:11px;color:#3a4558;font-weight:normal;transform:scaleX(1.0547);transform-origin:0 0;">1111111</div>
<div class="t" style="left:1226.00px;top:470.69px;font-size:11px;color:#3a4558;font-weight:normal;transform:scaleX(1.0162);transform-origin:0 0;">2024-12-09,  13:36:23</div>
<div class="a" style="left:5px;top:258px;width:958px;height:742px;background:#c9d2df;border:1px solid #1f2838;"></div>
<div class="a" style="left:6px;top:259px;width:956px;height:740px;border-top:1px solid #f5f7fa;border-left:1px solid #f5f7fa;"></div>
<div class="a" style="left:7px;top:260px;width:954px;height:28px;background:linear-gradient(#a8b3ca,#c9d1de);"></div>
<div class="a" style="left:7px;top:288px;width:6px;height:704px;background:linear-gradient(90deg,#bcc6d4,#dde3eb 55%,#c6cfdb);"></div>
<svg class="a" style="left:14px;top:266px" width="18" height="20"><circle cx="8" cy="5.5" r="3.3" fill="none" stroke="#7a8a96" stroke-width=".7" opacity=".8"/><circle cx="13.5" cy="8.5" r="3.0" fill="none" stroke="#7a8a96" stroke-width=".7" opacity=".8"/><circle cx="10.5" cy="14.5" r="3.3" fill="none" stroke="#7a8a96" stroke-width=".7" opacity=".8"/><circle cx="4.5" cy="11" r="3.0" fill="none" stroke="#7a8a96" stroke-width=".7" opacity=".8"/><path d="M4.75 6.07 A3.3 3.3 0 0 1 11.25 4.93" fill="none" stroke="#1aa030" stroke-width="2.2"/><path d="M14.02 5.55 A3.0 3.0 0 0 1 13.50 11.50" fill="none" stroke="#f2c000" stroke-width="2.2"/><path d="M13.75 13.93 A3.3 3.3 0 0 1 7.25 15.07" fill="none" stroke="#e83a00" stroke-width="2.2"/><path d="M5.02 13.95 A3.0 3.0 0 0 1 3.47 8.18" fill="none" stroke="#1438d8" stroke-width="2.2"/></svg>
<div class="t" style="left:35.00px;top:268.84px;font-size:12px;color:#15192a;font-weight:normal;transform:scaleX(0.9403);transform-origin:0 0;">MODUS</div>
<div class="a" style="left:892px;top:268px;width:30px;height:16px;border:1px solid #5b6b85;border-radius:3px;background:linear-gradient(#d6e0ec,#c4d2e2 45%,#aebfd4 50%,#c9d7e6);"></div>
<div class="a" style="left:902px;top:272px;width:10px;height:8px;border:1px solid #4a5568;background:#fff;"></div>
<div class="a" style="left:904px;top:275px;width:6px;height:2px;background:#4a5568;"></div>
<div class="a" style="left:924px;top:268px;width:31px;height:16px;border:1px solid #5a1f1f;border-radius:3px;background:linear-gradient(#eab0a0,#d9735c 45%,#c2401f 50%,#e07c5c);"></div>
<svg class="a" style="left:933px;top:270px" width="13" height="11"><path d="M2.5 2 L10.5 9 M10.5 2 L2.5 9" stroke="#5a2a2a" stroke-width="3.6"/><path d="M2.5 2 L10.5 9 M10.5 2 L2.5 9" stroke="#fff" stroke-width="2.2"/></svg>
<div class="a" style="left:13px;top:288px;width:942px;height:48px;background:linear-gradient(#c5cfdd,#bcc7d8);border:1px solid #9eaabb;border-bottom:none;border-radius:2px 2px 0 0;"></div>
<svg class="a" style="left:31px;top:292px" width="22" height="22"><rect x="5" y="1" width="12" height="7" fill="#f6f8fb" stroke="#8a98b0"/><rect x="1" y="7" width="20" height="9" rx="3" fill="#e4e9f1" stroke="#8090aa"/><rect x="4" y="8.5" width="14" height="2.5" fill="#3a4560"/><rect x="4" y="14" width="14" height="7" fill="#fff" stroke="#8090aa"/><rect x="5" y="16" width="12" height="3" fill="#4a9ae0"/></svg>
<svg class="a" style="left:83px;top:295px" width="22" height="15"><rect x="1" y="1" width="1.6" height="12" fill="#a6cdf0" stroke="#5a8ac0" stroke-width=".6"/><path d="M4 7 L12 1 V13 Z" fill="#a6cdf0" stroke="#5a8ac0" stroke-width=".8"/><path d="M11 7 L20 1 V13 Z" fill="#a6cdf0" stroke="#5a8ac0" stroke-width=".8"/></svg>
<svg class="a" style="left:138px;top:295px" width="21" height="15"><path d="M1 7 L10 1 V13 Z" fill="#a6cdf0" stroke="#5a8ac0" stroke-width=".8"/><path d="M9 7 L19 1 V13 Z" fill="#a6cdf0" stroke="#5a8ac0" stroke-width=".8"/></svg>
<svg class="a" style="left:197px;top:295px" width="21" height="15"><path d="M20 7 L11 1 V13 Z" fill="#a6cdf0" stroke="#5a8ac0" stroke-width=".8"/><path d="M12 7 L2 1 V13 Z" fill="#a6cdf0" stroke="#5a8ac0" stroke-width=".8"/></svg>
<svg class="a" style="left:246px;top:295px" width="23" height="15"><path d="M18 7 L10 1 V13 Z" fill="#a6cdf0" stroke="#5a8ac0" stroke-width=".8"/><path d="M11 7 L2 1 V13 Z" fill="#a6cdf0" stroke="#5a8ac0" stroke-width=".8"/><rect x="19.5" y="1" width="1.6" height="12" fill="#a6cdf0" stroke="#5a8ac0" stroke-width=".6"/></svg>
<div class="t" style="left:25.00px;top:319.69px;font-size:11px;color:#1f2a3d;font-weight:normal;transform:scaleX(0.9753);transform-origin:0 0;">Drukuj</div>
<div class="t" style="left:72.50px;top:319.69px;font-size:11px;color:#1f2a3d;font-weight:normal;transform:scaleX(0.9300);transform-origin:0 0;">Pierwsza</div>
<div class="t" style="left:121.00px;top:319.69px;font-size:11px;color:#1f2a3d;font-weight:normal;transform:scaleX(0.9524);transform-origin:0 0;">Poprzednia</div>
<div class="t" style="left:182.00px;top:319.69px;font-size:11px;color:#1f2a3d;font-weight:normal;">Następna</div>
<div class="t" style="left:236.00px;top:319.69px;font-size:11px;color:#1f2a3d;font-weight:normal;transform:scaleX(0.9765);transform-origin:0 0;">Ostatnia</div>
<div class="t" style="left:357.00px;top:319.69px;font-size:11px;color:#1f2a3d;font-weight:normal;transform:scaleX(0.9861);transform-origin:0 0;">Miniatury</div>
<div class="t" style="left:422.00px;top:319.69px;font-size:11px;color:#1f2a3d;font-weight:normal;transform:scaleX(0.9874);transform-origin:0 0;">Indeks</div>
<div class="t" style="left:471.00px;top:319.69px;font-size:11px;color:#1f2a3d;font-weight:normal;transform:scaleX(0.9814);transform-origin:0 0;">Eksportuj</div>
<div class="a" style="left:281px;top:290px;width:1px;height:44px;background:#a9b4c4;"></div>
<div class="a" style="left:282px;top:290px;width:1px;height:44px;background:#d8dfe8;"></div>
<div class="a" style="left:284px;top:290px;width:64px;height:44px;background:linear-gradient(#eef1f5,#dfe5ec 50%,#d3dae4);border:1px solid #a7b1bf;border-radius:3px;"></div>
<div class="a" style="left:331px;top:291px;width:1px;height:42px;background:#aeb7c4;"></div>
<div class="a" style="left:332px;top:291px;width:1px;height:42px;background:#f5f7fa;"></div>
<svg class="a" style="left:296px;top:292px" width="24" height="22"><circle cx="9" cy="8.5" r="6.5" fill="#cfe4fb" stroke="#4a7ab8" stroke-width="1.8"/><circle cx="8" cy="7" r="3" fill="#fff" opacity=".7"/><path d="M14 13.5 L21 20" stroke="#d8902a" stroke-width="3.2" stroke-linecap="round"/></svg>
<div class="t" style="left:293.00px;top:319.69px;font-size:11px;color:#1f2a3d;font-weight:normal;">100%</div>
<svg class="a" style="left:335px;top:310px" width="9" height="5"><path d="M0 0 H8 L4 4.5 Z" fill="#1f2a3d"/></svg>
<svg class="a" style="left:369px;top:292px" width="22" height="22"><g fill="#6aa0e0" stroke="#3a70b8" stroke-width=".6"><rect x="1" y="1" width="9" height="5"/><rect x="12" y="1" width="9" height="5"/><rect x="1" y="8" width="9" height="5"/><rect x="12" y="8" width="9" height="5"/><rect x="1" y="15" width="9" height="5"/><rect x="12" y="15" width="9" height="5"/></g></svg>
<svg class="a" style="left:432px;top:292px" width="12" height="22"><rect x="1" y="1" width="10" height="20" fill="#fafbfd" stroke="#8a98b0"/><rect x="3" y="3" width="2" height="5" fill="#e04040"/><rect x="3" y="9" width="2" height="10" fill="#4a8ad8"/><path d="M7 4 H9 M7 7 H9 M7 10 H9 M7 13 H9 M7 16 H9" stroke="#555"/></svg>
<div class="a" style="left:466px;top:290px;width:1px;height:44px;background:#a9b4c4;"></div>
<div class="a" style="left:467px;top:290px;width:1px;height:44px;background:#d8dfe8;"></div>
<svg class="a" style="left:484px;top:293px" width="24" height="19"><g stroke="#fff" stroke-width="3.6" stroke-linecap="round"><path d="M9.5 4 H21 M9.5 9.5 H21 M9.5 15 H21"/></g><g stroke="#1f2a3d" stroke-width="1.9" stroke-linecap="round"><path d="M9.5 4 H21 M9.5 9.5 H21 M9.5 15 H21"/></g><g fill="#cfe3f8" stroke="#2f6fc8" stroke-width="1.1"><circle cx="4" cy="4" r="1.8"/><circle cx="4" cy="9.5" r="1.8"/><circle cx="4" cy="15" r="1.8"/></g></svg>
<div class="a" style="left:522px;top:290px;width:1px;height:44px;background:#a9b4c4;"></div>
<div class="a" style="left:523px;top:290px;width:1px;height:44px;background:#d8dfe8;"></div>
<svg class="a" style="left:530px;top:296px" width="11" height="17"><path d="M9 1 L2 8.5 L9 16" fill="none" stroke="#1f2533" stroke-width="1.4"/></svg>
<svg class="a" style="left:680px;top:296px" width="11" height="17"><path d="M2 1 L9 8.5 L2 16" fill="none" stroke="#1f2533" stroke-width="1.4"/></svg>
<div class="a" style="left:547px;top:296px;width:127px;height:16px;background:#fff;border:1px solid #a9b3c2;"></div>
<div class="t" style="left:549.00px;top:298.84px;font-size:12px;color:#1f2533;font-weight:normal;transform:scaleX(0.9372);transform-origin:0 0;">Rok</div>
<svg class="a" style="left:661px;top:302px" width="8" height="5"><path d="M0 0 H7 L3.5 4 Z" fill="#1f2533"/></svg>
<div class="a" style="left:526px;top:315px;width:82px;height:18px;background:#fff;border:1px solid #a9b3c2;"></div>
<div class="t" style="left:527.00px;top:316.84px;font-size:12px;color:#1f2533;font-weight:normal;transform:scaleX(0.9158);transform-origin:0 0;">01.01.2020</div>
<svg class="a" style="left:594px;top:322px" width="8" height="5"><path d="M0 0 H7 L3.5 4 Z" fill="#1f2533"/></svg>
<div class="a" style="left:611px;top:315px;width:82px;height:18px;background:#fff;border:1px solid #a9b3c2;"></div>
<div class="t" style="left:612.00px;top:316.84px;font-size:12px;color:#1f2533;font-weight:normal;transform:scaleX(0.9158);transform-origin:0 0;">31.12.2020</div>
<svg class="a" style="left:679px;top:322px" width="8" height="5"><path d="M0 0 H7 L3.5 4 Z" fill="#1f2533"/></svg>
<div class="a" style="left:698px;top:295px;width:31px;height:37px;background:linear-gradient(#f4f1ea,#e3dfd6);border:1px solid #c9bf9f;border-radius:3px;"></div>
<div class="a" style="left:701px;top:298px;width:25px;height:31px;border:1px dotted #1f2533;"></div>
<svg class="a" style="left:704px;top:304px" width="18" height="18"><path d="M8 1.5 Q4 4 5 9" fill="none" stroke="#5ab4ee" stroke-width="2.6"/><path d="M1 8.5 L9 8 L5.5 13 Z" fill="#3a9ae6"/><path d="M9 16.5 Q13 14 12 9" fill="none" stroke="#1a6ac4" stroke-width="2.6"/><path d="M8 10 L12.5 4.5 L16.5 10 Z" fill="#1a6ac4"/></svg>
<div class="a" style="left:732px;top:290px;width:1px;height:44px;background:#a9b4c4;"></div>
<div class="a" style="left:733px;top:290px;width:1px;height:44px;background:#d8dfe8;"></div>
<svg class="a" style="left:500px;top:275px" width="260" height="80"><ellipse cx="127" cy="39" rx="116" ry="30.5" fill="none" stroke="rgba(0,0,0,.12)" stroke-width="5" transform="translate(1,1.5)"/><ellipse cx="127" cy="39" rx="116" ry="30.5" fill="none" stroke="#f01212" stroke-width="2.2"/></svg>
<div class="a" style="left:13px;top:336px;width:942px;height:656px;background:#c0c0c0;border-top:2px solid #7c7c7c;border-left:1px solid #7c7c7c;"></div>
<div class="a" style="left:13px;top:990px;width:942px;height:2px;background:#f4f4f4;"></div>
<div class="a" style="left:936px;top:338px;width:19px;height:652px;background:#cdcdcd;border-left:1.5px solid #fafafa;border-right:2px solid #f0f0f0;"></div>
<div class="a" style="left:937px;top:338px;width:16px;height:17px;background:#efefef;"></div>
<svg class="a" style="left:941px;top:344px" width="9" height="6"><path d="M1 5 L4.5 1.5 L8 5" fill="none" stroke="#505050" stroke-width="1.8"/></svg>
<div class="a" style="left:937px;top:971px;width:16px;height:19px;background:#efefef;"></div>
<svg class="a" style="left:941px;top:978px" width="9" height="6"><path d="M1 1 L4.5 4.5 L8 1" fill="none" stroke="#505050" stroke-width="1.8"/></svg>
<div class="a" style="left:23px;top:346px;width:899px;height:637px;background:#fff;border:3px solid #990000;"></div>
<div class="t" style="left:42.00px;top:374.69px;font-size:11px;color:#000;font-weight:normal;transform:scaleX(0.9627);transform-origin:0 0;letter-spacing:0.3px;">Firma:</div>
<div class="a" style="left:40px;top:387px;width:423px;height:1px;background:#000;"></div>
<div class="t" style="left:42.00px;top:392.69px;font-size:11px;color:#000;font-weight:normal;transform:scaleX(0.9585);transform-origin:0 0;">Firma DEMO</div>
<div class="t" style="left:42.00px;top:423.11px;font-size:10.5px;color:#000;font-weight:normal;transform:scaleX(0.9912);transform-origin:0 0;">36-412 Kraków</div>
<div class="t" style="left:42.00px;top:438.11px;font-size:10.5px;color:#000;font-weight:normal;">ul. Fabryczna 3</div>
<div class="t" style="left:42.00px;top:453.11px;font-size:10.5px;color:#000;font-weight:normal;transform:scaleX(1.0949);transform-origin:0 0;">NIP: 111111111111111</div>
<div class="t" style="left:622.00px;top:373.00px;font-size:13px;color:#000;font-weight:normal;transform:scaleX(0.9847);transform-origin:0 0;">Rejestr sprzedaży VAT</div>
<div class="a" style="left:620px;top:385px;width:288px;height:1px;background:#000;"></div>
<div class="t" style="left:622.00px;top:390.11px;font-size:10.5px;color:#000;font-weight:normal;transform:scaleX(1.0064);transform-origin:0 0;">Za okres: 01.01.2020  -  31.12.2020</div>
<svg class="a" style="left:585px;top:350px" width="300" height="80"><ellipse cx="150" cy="37.5" rx="140" ry="32" fill="none" stroke="rgba(0,0,0,.12)" stroke-width="5" transform="translate(1,1.5)"/><ellipse cx="150" cy="37.5" rx="140" ry="32" fill="none" stroke="#f01212" stroke-width="2.2"/></svg>
<div class="a" style="left:40px;top:471px;width:670px;height:1px;background:#000;"></div>
<div class="a" style="left:40px;top:487px;width:670px;height:1px;background:#000;"></div>
<div class="a" style="left:497px;top:518px;width:213px;height:1px;background:#000;"></div>
<div class="a" style="left:40px;top:532px;width:458px;height:1px;background:#000;"></div>
<div class="a" style="left:497px;top:531px;width:213px;height:2px;background:#000;"></div>
<div class="a" style="left:40px;top:547px;width:670px;height:1px;background:#000;"></div>
<div class="a" style="left:40px;top:562px;width:670px;height:1px;background:#000;"></div>
<div class="a" style="left:40px;top:577px;width:670px;height:1px;background:#000;"></div>
<div class="a" style="left:40px;top:593px;width:670px;height:1px;background:#000;"></div>
<div class="a" style="left:40px;top:608px;width:670px;height:1px;background:#000;"></div>
<div class="a" style="left:40px;top:623px;width:670px;height:1px;background:#000;"></div>
<div class="a" style="left:40px;top:638px;width:670px;height:1px;background:#000;"></div>
<div class="a" style="left:40px;top:653px;width:670px;height:1px;background:#000;"></div>
<div class="a" style="left:40px;top:668px;width:670px;height:1px;background:#000;"></div>
<div class="a" style="left:40px;top:683px;width:670px;height:1px;background:#000;"></div>
<div class="a" style="left:40px;top:698px;width:670px;height:1px;background:#000;"></div>
<div class="a" style="left:40px;top:714px;width:670px;height:1px;background:#000;"></div>
<div class="a" style="left:40px;top:729px;width:670px;height:1px;background:#000;"></div>
<div class="a" style="left:40px;top:471px;width:1px;height:259px;background:#000;"></div>
<div class="a" style="left:709px;top:471px;width:1px;height:259px;background:#000;"></div>
<div class="a" style="left:496px;top:470px;width:2px;height:260px;background:#000;"></div>
<div class="a" style="left:602px;top:487px;width:2px;height:243px;background:#000;"></div>
<div class="a" style="left:54px;top:487px;width:1px;height:228px;background:#000;"></div>
<div class="a" style="left:108px;top:487px;width:1px;height:228px;background:#000;"></div>
<div class="a" style="left:159px;top:487px;width:1px;height:228px;background:#000;"></div>
<div class="a" style="left:318px;top:487px;width:1px;height:228px;background:#000;"></div>
<div class="a" style="left:399px;top:487px;width:1px;height:228px;background:#000;"></div>
<div class="a" style="left:451px;top:487px;width:1px;height:228px;background:#000;"></div>
<div class="a" style="left:556px;top:518px;width:1px;height:212px;background:#000;"></div>
<div class="a" style="left:661px;top:518px;width:1px;height:212px;background:#000;"></div>
<div class="t" style="left:224.07px;top:475.38px;font-size:9px;color:#000;font-weight:normal;transform:scaleX(0.9400);transform-origin:0 0;-webkit-text-stroke:0.12px #000;">Szczegóły dokumentów</div>
<div class="t" style="left:551.52px;top:475.38px;font-size:9px;color:#000;font-weight:normal;transform:scaleX(0.9400);transform-origin:0 0;-webkit-text-stroke:0.12px #000;">Wartość według stawek Vat</div>
<div class="t" style="left:42.30px;top:506.38px;font-size:9px;color:#000;font-weight:normal;transform:scaleX(0.9400);transform-origin:0 0;-webkit-text-stroke:0.12px #000;">Lp</div>
<div class="t" style="left:72.26px;top:495.88px;font-size:9px;color:#000;font-weight:normal;transform:scaleX(0.9200);transform-origin:0 0;-webkit-text-stroke:0.12px #000;">Data</div>
<div class="t" style="left:60.98px;top:505.08px;font-size:9px;color:#000;font-weight:normal;transform:scaleX(0.9200);transform-origin:0 0;-webkit-text-stroke:0.12px #000;">sprzedaży/</div>
<div class="t" style="left:57.53px;top:514.28px;font-size:9px;color:#000;font-weight:normal;transform:scaleX(0.9200);transform-origin:0 0;-webkit-text-stroke:0.12px #000;">Data wpływu</div>
<div class="t" style="left:124.76px;top:495.88px;font-size:9px;color:#000;font-weight:normal;transform:scaleX(0.9200);transform-origin:0 0;-webkit-text-stroke:0.12px #000;">Data</div>
<div class="t" style="left:111.18px;top:505.08px;font-size:9px;color:#000;font-weight:normal;transform:scaleX(0.9200);transform-origin:0 0;-webkit-text-stroke:0.12px #000;">wystawienia</div>
<div class="t" style="left:113.02px;top:514.28px;font-size:9px;color:#000;font-weight:normal;transform:scaleX(0.9200);transform-origin:0 0;-webkit-text-stroke:0.12px #000;">dokumentu</div>
<div class="t" style="left:217.81px;top:506.38px;font-size:9px;color:#000;font-weight:normal;transform:scaleX(0.9400);transform-origin:0 0;-webkit-text-stroke:0.12px #000;">Kontrahent</div>
<div class="t" style="left:345.81px;top:506.38px;font-size:9px;color:#000;font-weight:normal;transform:scaleX(0.9400);transform-origin:0 0;-webkit-text-stroke:0.12px #000;">Numer</div>
<div class="t" style="left:418.65px;top:506.38px;font-size:9px;color:#000;font-weight:normal;transform:scaleX(0.9400);transform-origin:0 0;-webkit-text-stroke:0.12px #000;">Nip</div>
<div class="t" style="left:458.65px;top:506.38px;font-size:9px;color:#000;font-weight:normal;transform:scaleX(0.9400);transform-origin:0 0;-webkit-text-stroke:0.12px #000;">Wartość</div>
<div class="t" style="left:541.53px;top:505.88px;font-size:9px;color:#000;font-weight:normal;transform:scaleX(0.9400);transform-origin:0 0;-webkit-text-stroke:0.12px #000;">23%</div>
<div class="t" style="left:649.89px;top:505.88px;font-size:9px;color:#000;font-weight:normal;transform:scaleX(0.9400);transform-origin:0 0;-webkit-text-stroke:0.12px #000;">0%</div>
<div class="t" style="left:500.84px;top:521.38px;font-size:9px;color:#000;font-weight:normal;transform:scaleX(0.9300);transform-origin:0 0;-webkit-text-stroke:0.12px #000;">Wartość netto</div>
<div class="t" style="left:559.19px;top:521.38px;font-size:9px;color:#000;font-weight:normal;transform:scaleX(0.9300);transform-origin:0 0;-webkit-text-stroke:0.12px #000;">Kwota VAT</div>
<div class="t" style="left:606.34px;top:521.38px;font-size:9px;color:#000;font-weight:normal;transform:scaleX(0.9300);transform-origin:0 0;-webkit-text-stroke:0.12px #000;">Wartość netto</div>
<div class="t" style="left:664.69px;top:521.38px;font-size:9px;color:#000;font-weight:normal;transform:scaleX(0.9300);transform-origin:0 0;-webkit-text-stroke:0.12px #000;">Kwota VAT</div>
<div class="t" style="left:44.65px;top:536.18px;font-size:9px;color:#000;font-weight:normal;transform:scaleX(0.9400);transform-origin:0 0;-webkit-text-stroke:0.12px #000;">2</div>
<div class="t" style="left:59.83px;top:536.18px;font-size:9px;color:#000;font-weight:normal;transform:scaleX(0.9400);transform-origin:0 0;-webkit-text-stroke:0.12px #000;">08.01.2020</div>
<div class="t" style="left:112.33px;top:536.18px;font-size:9px;color:#000;font-weight:normal;transform:scaleX(0.9400);transform-origin:0 0;-webkit-text-stroke:0.12px #000;">08.01.2020</div>
<div class="t" style="left:161.00px;top:536.18px;font-size:9px;color:#000;font-weight:normal;transform:scaleX(0.9400);transform-origin:0 0;-webkit-text-stroke:0.12px #000;">MARIUSZ OKOŃSKI RHO SOFTWARE,</div>
<div class="t" style="left:320.00px;top:536.18px;font-size:9px;color:#000;font-weight:normal;transform:scaleX(0.9400);transform-origin:0 0;-webkit-text-stroke:0.12px #000;">FA 00001/2020</div>
<div class="t" style="left:401.00px;top:536.18px;font-size:9px;color:#000;font-weight:normal;transform:scaleX(0.9200);transform-origin:0 0;-webkit-text-stroke:0.12px #000;">5691066210</div>
<div class="t" style="left:469.13px;top:536.18px;font-size:9px;color:#000;font-weight:normal;transform:scaleX(0.9400);transform-origin:0 0;-webkit-text-stroke:0.12px #000;">615,00</div>
<div class="t" style="left:527.13px;top:536.18px;font-size:9px;color:#000;font-weight:normal;transform:scaleX(0.9400);transform-origin:0 0;-webkit-text-stroke:0.12px #000;">500,00</div>
<div class="t" style="left:575.76px;top:536.18px;font-size:9px;color:#000;font-weight:normal;transform:scaleX(0.9400);transform-origin:0 0;-webkit-text-stroke:0.12px #000;">115,00</div>
<div class="t" style="left:44.65px;top:551.18px;font-size:9px;color:#000;font-weight:normal;transform:scaleX(0.9400);transform-origin:0 0;-webkit-text-stroke:0.12px #000;">3</div>
<div class="t" style="left:59.83px;top:551.18px;font-size:9px;color:#000;font-weight:normal;transform:scaleX(0.9400);transform-origin:0 0;-webkit-text-stroke:0.12px #000;">09.01.2020</div>
<div class="t" style="left:112.33px;top:551.18px;font-size:9px;color:#000;font-weight:normal;transform:scaleX(0.9400);transform-origin:0 0;-webkit-text-stroke:0.12px #000;">09.01.2020</div>
<div class="t" style="left:161.00px;top:551.18px;font-size:9px;color:#000;font-weight:normal;transform:scaleX(0.9400);transform-origin:0 0;-webkit-text-stroke:0.12px #000;">NIEOKREŚLONY</div>
<div class="t" style="left:320.00px;top:551.18px;font-size:9px;color:#000;font-weight:normal;transform:scaleX(0.9400);transform-origin:0 0;-webkit-text-stroke:0.12px #000;">FA 00002/2020</div>
<div class="t" style="left:478.54px;top:551.18px;font-size:9px;color:#000;font-weight:normal;transform:scaleX(0.9400);transform-origin:0 0;-webkit-text-stroke:0.12px #000;">0,00</div>
<div class="t" style="left:536.54px;top:551.18px;font-size:9px;color:#000;font-weight:normal;transform:scaleX(0.9400);transform-origin:0 0;-webkit-text-stroke:0.12px #000;">0,00</div>
<div class="t" style="left:584.54px;top:551.18px;font-size:9px;color:#000;font-weight:normal;transform:scaleX(0.9400);transform-origin:0 0;-webkit-text-stroke:0.12px #000;">0,00</div>
<div class="t" style="left:44.65px;top:566.18px;font-size:9px;color:#000;font-weight:normal;transform:scaleX(0.9400);transform-origin:0 0;-webkit-text-stroke:0.12px #000;">4</div>
<div class="t" style="left:59.83px;top:566.18px;font-size:9px;color:#000;font-weight:normal;transform:scaleX(0.9400);transform-origin:0 0;-webkit-text-stroke:0.12px #000;">20.01.2020</div>
<div class="t" style="left:112.33px;top:566.18px;font-size:9px;color:#000;font-weight:normal;transform:scaleX(0.9400);transform-origin:0 0;-webkit-text-stroke:0.12px #000;">20.01.2020</div>
<div class="t" style="left:161.00px;top:566.18px;font-size:9px;color:#000;font-weight:normal;transform:scaleX(0.9400);transform-origin:0 0;-webkit-text-stroke:0.12px #000;">Dostawca 1</div>
<div class="t" style="left:320.00px;top:566.18px;font-size:9px;color:#000;font-weight:normal;transform:scaleX(0.9400);transform-origin:0 0;-webkit-text-stroke:0.12px #000;">FZA 00001/01/2020</div>
<div class="t" style="left:401.00px;top:566.18px;font-size:9px;color:#000;font-weight:normal;transform:scaleX(0.9200);transform-origin:0 0;-webkit-text-stroke:0.12px #000;">6547893214</div>
<div class="t" style="left:469.13px;top:566.18px;font-size:9px;color:#000;font-weight:normal;transform:scaleX(0.9400);transform-origin:0 0;-webkit-text-stroke:0.12px #000;">235,27</div>
<div class="t" style="left:632.13px;top:566.18px;font-size:9px;color:#000;font-weight:normal;transform:scaleX(0.9400);transform-origin:0 0;-webkit-text-stroke:0.12px #000;">235,27</div>
<div class="t" style="left:689.54px;top:566.18px;font-size:9px;color:#000;font-weight:normal;transform:scaleX(0.9400);transform-origin:0 0;-webkit-text-stroke:0.12px #000;">0,00</div>
<div class="t" style="left:44.65px;top:581.18px;font-size:9px;color:#000;font-weight:normal;transform:scaleX(0.9400);transform-origin:0 0;-webkit-text-stroke:0.12px #000;">5</div>
<div class="t" style="left:59.83px;top:581.18px;font-size:9px;color:#000;font-weight:normal;transform:scaleX(0.9400);transform-origin:0 0;-webkit-text-stroke:0.12px #000;">30.01.2020</div>
<div class="t" style="left:112.33px;top:581.18px;font-size:9px;color:#000;font-weight:normal;transform:scaleX(0.9400);transform-origin:0 0;-webkit-text-stroke:0.12px #000;">30.01.2020</div>
<div class="t" style="left:161.00px;top:581.18px;font-size:9px;color:#000;font-weight:normal;transform:scaleX(0.9400);transform-origin:0 0;-webkit-text-stroke:0.12px #000;">Dostawca 3</div>
<div class="t" style="left:320.00px;top:581.18px;font-size:9px;color:#000;font-weight:normal;transform:scaleX(0.9400);transform-origin:0 0;-webkit-text-stroke:0.12px #000;">FA 00005/2020</div>
<div class="t" style="left:401.00px;top:581.18px;font-size:9px;color:#000;font-weight:normal;transform:scaleX(0.9200);transform-origin:0 0;-webkit-text-stroke:0.12px #000;">9876543214</div>
<div class="t" style="left:473.83px;top:581.18px;font-size:9px;color:#000;font-weight:normal;transform:scaleX(0.9400);transform-origin:0 0;-webkit-text-stroke:0.12px #000;">61,50</div>
<div class="t" style="left:531.83px;top:581.18px;font-size:9px;color:#000;font-weight:normal;transform:scaleX(0.9400);transform-origin:0 0;-webkit-text-stroke:0.12px #000;">50,00</div>
<div class="t" style="left:580.46px;top:581.18px;font-size:9px;color:#000;font-weight:normal;transform:scaleX(0.9400);transform-origin:0 0;-webkit-text-stroke:0.12px #000;">11,50</div>
<div class="t" style="left:44.65px;top:597.18px;font-size:9px;color:#000;font-weight:normal;transform:scaleX(0.9400);transform-origin:0 0;-webkit-text-stroke:0.12px #000;">6</div>
<div class="t" style="left:59.83px;top:597.18px;font-size:9px;color:#000;font-weight:normal;transform:scaleX(0.9400);transform-origin:0 0;-webkit-text-stroke:0.12px #000;">30.01.2020</div>
<div class="t" style="left:112.33px;top:597.18px;font-size:9px;color:#000;font-weight:normal;transform:scaleX(0.9400);transform-origin:0 0;-webkit-text-stroke:0.12px #000;">30.01.2020</div>
<div class="t" style="left:161.00px;top:597.18px;font-size:9px;color:#000;font-weight:normal;transform:scaleX(0.9400);transform-origin:0 0;-webkit-text-stroke:0.12px #000;">Odbiorca 2</div>
<div class="t" style="left:320.00px;top:597.18px;font-size:9px;color:#000;font-weight:normal;transform:scaleX(0.9400);transform-origin:0 0;-webkit-text-stroke:0.12px #000;">FE 00001/01/2020</div>
<div class="t" style="left:401.00px;top:597.18px;font-size:9px;color:#000;font-weight:normal;transform:scaleX(0.9200);transform-origin:0 0;-webkit-text-stroke:0.12px #000;">6452274212</div>
<div class="t" style="left:469.13px;top:597.18px;font-size:9px;color:#000;font-weight:normal;transform:scaleX(0.9400);transform-origin:0 0;-webkit-text-stroke:0.12px #000;">157,85</div>
<div class="t" style="left:527.13px;top:597.18px;font-size:9px;color:#000;font-weight:normal;transform:scaleX(0.9400);transform-origin:0 0;-webkit-text-stroke:0.12px #000;">128,33</div>
<div class="t" style="left:579.83px;top:597.18px;font-size:9px;color:#000;font-weight:normal;transform:scaleX(0.9400);transform-origin:0 0;-webkit-text-stroke:0.12px #000;">29,52</div>
<div class="t" style="left:44.65px;top:612.18px;font-size:9px;color:#000;font-weight:normal;transform:scaleX(0.9400);transform-origin:0 0;-webkit-text-stroke:0.12px #000;">7</div>
<div class="t" style="left:59.83px;top:612.18px;font-size:9px;color:#000;font-weight:normal;transform:scaleX(0.9400);transform-origin:0 0;-webkit-text-stroke:0.12px #000;">17.06.2020</div>
<div class="t" style="left:112.33px;top:612.18px;font-size:9px;color:#000;font-weight:normal;transform:scaleX(0.9400);transform-origin:0 0;-webkit-text-stroke:0.12px #000;">17.06.2020</div>
<div class="t" style="left:161.00px;top:612.18px;font-size:9px;color:#000;font-weight:normal;transform:scaleX(0.9400);transform-origin:0 0;-webkit-text-stroke:0.12px #000;">MARIUSZ OKOŃSKI RHO SOFTWARE,</div>
<div class="t" style="left:320.00px;top:612.18px;font-size:9px;color:#000;font-weight:normal;transform:scaleX(0.9400);transform-origin:0 0;-webkit-text-stroke:0.12px #000;">FZA 00001/06/2020</div>
<div class="t" style="left:401.00px;top:612.18px;font-size:9px;color:#000;font-weight:normal;transform:scaleX(0.9200);transform-origin:0 0;-webkit-text-stroke:0.12px #000;">5691066210</div>
<div class="t" style="left:478.54px;top:612.18px;font-size:9px;color:#000;font-weight:normal;transform:scaleX(0.9400);transform-origin:0 0;-webkit-text-stroke:0.12px #000;">0,00</div>
<div class="t" style="left:536.54px;top:612.18px;font-size:9px;color:#000;font-weight:normal;transform:scaleX(0.9400);transform-origin:0 0;-webkit-text-stroke:0.12px #000;">0,00</div>
<div class="t" style="left:584.54px;top:612.18px;font-size:9px;color:#000;font-weight:normal;transform:scaleX(0.9400);transform-origin:0 0;-webkit-text-stroke:0.12px #000;">0,00</div>
<div class="t" style="left:44.65px;top:627.18px;font-size:9px;color:#000;font-weight:normal;transform:scaleX(0.9400);transform-origin:0 0;-webkit-text-stroke:0.12px #000;">8</div>
<div class="t" style="left:59.83px;top:627.18px;font-size:9px;color:#000;font-weight:normal;transform:scaleX(0.9400);transform-origin:0 0;-webkit-text-stroke:0.12px #000;">18.06.2020</div>
<div class="t" style="left:112.33px;top:627.18px;font-size:9px;color:#000;font-weight:normal;transform:scaleX(0.9400);transform-origin:0 0;-webkit-text-stroke:0.12px #000;">18.06.2020</div>
<div class="t" style="left:161.00px;top:627.18px;font-size:9px;color:#000;font-weight:normal;transform:scaleX(0.9400);transform-origin:0 0;-webkit-text-stroke:0.12px #000;">MARIUSZ OKOŃSKI RHO SOFTWARE,</div>
<div class="t" style="left:320.00px;top:627.18px;font-size:9px;color:#000;font-weight:normal;transform:scaleX(0.9400);transform-origin:0 0;-webkit-text-stroke:0.12px #000;">FA 00007/2020</div>
<div class="t" style="left:401.00px;top:627.18px;font-size:9px;color:#000;font-weight:normal;transform:scaleX(0.9200);transform-origin:0 0;-webkit-text-stroke:0.12px #000;">5691066210</div>
<div class="t" style="left:478.54px;top:627.18px;font-size:9px;color:#000;font-weight:normal;transform:scaleX(0.9400);transform-origin:0 0;-webkit-text-stroke:0.12px #000;">0,00</div>
<div class="t" style="left:536.54px;top:627.18px;font-size:9px;color:#000;font-weight:normal;transform:scaleX(0.9400);transform-origin:0 0;-webkit-text-stroke:0.12px #000;">0,00</div>
<div class="t" style="left:584.54px;top:627.18px;font-size:9px;color:#000;font-weight:normal;transform:scaleX(0.9400);transform-origin:0 0;-webkit-text-stroke:0.12px #000;">0,00</div>
<div class="t" style="left:44.65px;top:642.18px;font-size:9px;color:#000;font-weight:normal;transform:scaleX(0.9400);transform-origin:0 0;-webkit-text-stroke:0.12px #000;">9</div>
<div class="t" style="left:59.83px;top:642.18px;font-size:9px;color:#000;font-weight:normal;transform:scaleX(0.9400);transform-origin:0 0;-webkit-text-stroke:0.12px #000;">08.07.2020</div>
<div class="t" style="left:112.33px;top:642.18px;font-size:9px;color:#000;font-weight:normal;transform:scaleX(0.9400);transform-origin:0 0;-webkit-text-stroke:0.12px #000;">08.07.2020</div>
<div class="t" style="left:161.00px;top:642.18px;font-size:9px;color:#000;font-weight:normal;transform:scaleX(0.9400);transform-origin:0 0;-webkit-text-stroke:0.12px #000;">Odbiorca 1</div>
<div class="t" style="left:320.00px;top:642.18px;font-size:9px;color:#000;font-weight:normal;transform:scaleX(0.9400);transform-origin:0 0;-webkit-text-stroke:0.12px #000;">FA 00008/2020</div>
<div class="t" style="left:401.00px;top:642.18px;font-size:9px;color:#000;font-weight:normal;transform:scaleX(0.9200);transform-origin:0 0;-webkit-text-stroke:0.12px #000;">5678941235</div>
<div class="t" style="left:478.54px;top:642.18px;font-size:9px;color:#000;font-weight:normal;transform:scaleX(0.9400);transform-origin:0 0;-webkit-text-stroke:0.12px #000;">0,00</div>
<div class="t" style="left:641.54px;top:642.18px;font-size:9px;color:#000;font-weight:normal;transform:scaleX(0.9400);transform-origin:0 0;-webkit-text-stroke:0.12px #000;">0,00</div>
<div class="t" style="left:689.54px;top:642.18px;font-size:9px;color:#000;font-weight:normal;transform:scaleX(0.9400);transform-origin:0 0;-webkit-text-stroke:0.12px #000;">0,00</div>
<div class="t" style="left:42.30px;top:657.18px;font-size:9px;color:#000;font-weight:normal;transform:scaleX(0.9400);transform-origin:0 0;-webkit-text-stroke:0.12px #000;">10</div>
<div class="t" style="left:59.83px;top:657.18px;font-size:9px;color:#000;font-weight:normal;transform:scaleX(0.9400);transform-origin:0 0;-webkit-text-stroke:0.12px #000;">08.07.2020</div>
<div class="t" style="left:112.33px;top:657.18px;font-size:9px;color:#000;font-weight:normal;transform:scaleX(0.9400);transform-origin:0 0;-webkit-text-stroke:0.12px #000;">08.07.2020</div>
<div class="t" style="left:161.00px;top:657.18px;font-size:9px;color:#000;font-weight:normal;transform:scaleX(0.9400);transform-origin:0 0;-webkit-text-stroke:0.12px #000;">Dostawca 1</div>
<div class="t" style="left:320.00px;top:657.18px;font-size:9px;color:#000;font-weight:normal;transform:scaleX(0.9400);transform-origin:0 0;-webkit-text-stroke:0.12px #000;">FA 00009/2020</div>
<div class="t" style="left:401.00px;top:657.18px;font-size:9px;color:#000;font-weight:normal;transform:scaleX(0.9200);transform-origin:0 0;-webkit-text-stroke:0.12px #000;">6547893214</div>
<div class="t" style="left:464.42px;top:657.18px;font-size:9px;color:#000;font-weight:normal;transform:scaleX(0.9400);transform-origin:0 0;-webkit-text-stroke:0.12px #000;">9470,83</div>
<div class="t" style="left:522.42px;top:657.18px;font-size:9px;color:#000;font-weight:normal;transform:scaleX(0.9400);transform-origin:0 0;-webkit-text-stroke:0.12px #000;">7699,86</div>
<div class="t" style="left:570.42px;top:657.18px;font-size:9px;color:#000;font-weight:normal;transform:scaleX(0.9400);transform-origin:0 0;-webkit-text-stroke:0.12px #000;">1770,97</div>
<div class="t" style="left:42.61px;top:672.18px;font-size:9px;color:#000;font-weight:normal;transform:scaleX(0.9400);transform-origin:0 0;-webkit-text-stroke:0.12px #000;">11</div>
<div class="t" style="left:59.83px;top:672.18px;font-size:9px;color:#000;font-weight:normal;transform:scaleX(0.9400);transform-origin:0 0;-webkit-text-stroke:0.12px #000;">16.07.2020</div>
<div class="t" style="left:112.33px;top:672.18px;font-size:9px;color:#000;font-weight:normal;transform:scaleX(0.9400);transform-origin:0 0;-webkit-text-stroke:0.12px #000;">16.07.2020</div>
<div class="t" style="left:161.00px;top:672.18px;font-size:9px;color:#000;font-weight:normal;transform:scaleX(0.9400);transform-origin:0 0;-webkit-text-stroke:0.12px #000;">Dostawca 1</div>
<div class="t" style="left:320.00px;top:672.18px;font-size:9px;color:#000;font-weight:normal;transform:scaleX(0.9400);transform-origin:0 0;-webkit-text-stroke:0.12px #000;">FA 00010/2020</div>
<div class="t" style="left:401.00px;top:672.18px;font-size:9px;color:#000;font-weight:normal;transform:scaleX(0.9200);transform-origin:0 0;-webkit-text-stroke:0.12px #000;">6547893214</div>
<div class="t" style="left:464.42px;top:672.18px;font-size:9px;color:#000;font-weight:normal;transform:scaleX(0.9400);transform-origin:0 0;-webkit-text-stroke:0.12px #000;">2299,30</div>
<div class="t" style="left:522.42px;top:672.18px;font-size:9px;color:#000;font-weight:normal;transform:scaleX(0.9400);transform-origin:0 0;-webkit-text-stroke:0.12px #000;">1869,35</div>
<div class="t" style="left:575.13px;top:672.18px;font-size:9px;color:#000;font-weight:normal;transform:scaleX(0.9400);transform-origin:0 0;-webkit-text-stroke:0.12px #000;">429,95</div>
<div class="t" style="left:42.30px;top:687.18px;font-size:9px;color:#000;font-weight:normal;transform:scaleX(0.9400);transform-origin:0 0;-webkit-text-stroke:0.12px #000;">12</div>
<div class="t" style="left:59.83px;top:687.18px;font-size:9px;color:#000;font-weight:normal;transform:scaleX(0.9400);transform-origin:0 0;-webkit-text-stroke:0.12px #000;">16.07.2020</div>
<div class="t" style="left:112.33px;top:687.18px;font-size:9px;color:#000;font-weight:normal;transform:scaleX(0.9400);transform-origin:0 0;-webkit-text-stroke:0.12px #000;">16.07.2020</div>
<div class="t" style="left:161.00px;top:687.18px;font-size:9px;color:#000;font-weight:normal;transform:scaleX(0.9400);transform-origin:0 0;-webkit-text-stroke:0.12px #000;">Dostawca 3</div>
<div class="t" style="left:320.00px;top:687.18px;font-size:9px;color:#000;font-weight:normal;transform:scaleX(0.9400);transform-origin:0 0;-webkit-text-stroke:0.12px #000;">FA 00011/2020</div>
<div class="t" style="left:401.00px;top:687.18px;font-size:9px;color:#000;font-weight:normal;transform:scaleX(0.9200);transform-origin:0 0;-webkit-text-stroke:0.12px #000;">9876543214</div>
<div class="t" style="left:455.01px;top:687.18px;font-size:9px;color:#000;font-weight:normal;transform:scaleX(0.9400);transform-origin:0 0;-webkit-text-stroke:0.12px #000;">241080,00</div>
<div class="t" style="left:513.01px;top:687.18px;font-size:9px;color:#000;font-weight:normal;transform:scaleX(0.9400);transform-origin:0 0;-webkit-text-stroke:0.12px #000;">196000,00</div>
<div class="t" style="left:565.72px;top:687.18px;font-size:9px;color:#000;font-weight:normal;transform:scaleX(0.9400);transform-origin:0 0;-webkit-text-stroke:0.12px #000;">45080,00</div>
<div class="t" style="left:42.30px;top:702.18px;font-size:9px;color:#000;font-weight:normal;transform:scaleX(0.9400);transform-origin:0 0;-webkit-text-stroke:0.12px #000;">13</div>
<div class="t" style="left:59.83px;top:702.18px;font-size:9px;color:#000;font-weight:normal;transform:scaleX(0.9400);transform-origin:0 0;-webkit-text-stroke:0.12px #000;">22.07.2020</div>
<div class="t" style="left:112.33px;top:702.18px;font-size:9px;color:#000;font-weight:normal;transform:scaleX(0.9400);transform-origin:0 0;-webkit-text-stroke:0.12px #000;">22.07.2020</div>
<div class="t" style="left:161.00px;top:702.18px;font-size:9px;color:#000;font-weight:normal;transform:scaleX(0.9400);transform-origin:0 0;-webkit-text-stroke:0.12px #000;">NIEOKREŚLONY</div>
<div class="t" style="left:320.00px;top:702.18px;font-size:9px;color:#000;font-weight:normal;transform:scaleX(0.9400);transform-origin:0 0;-webkit-text-stroke:0.12px #000;">FA 00012/2020</div>
<div class="t" style="left:469.13px;top:702.18px;font-size:9px;color:#000;font-weight:normal;transform:scaleX(0.9400);transform-origin:0 0;-webkit-text-stroke:0.12px #000;">553,50</div>
<div class="t" style="left:527.13px;top:702.18px;font-size:9px;color:#000;font-weight:normal;transform:scaleX(0.9400);transform-origin:0 0;-webkit-text-stroke:0.12px #000;">450,00</div>
<div class="t" style="left:575.13px;top:702.18px;font-size:9px;color:#000;font-weight:normal;transform:scaleX(0.9400);transform-origin:0 0;-webkit-text-stroke:0.12px #000;">103,50</div>
<div class="t" style="left:514.72px;top:718.18px;font-size:9px;color:#000;font-weight:bold;transform:scaleX(0.9000);transform-origin:0 0;-webkit-text-stroke:0.12px #000;">206697,54</div>
<div class="t" style="left:567.22px;top:718.18px;font-size:9px;color:#000;font-weight:bold;transform:scaleX(0.9000);transform-origin:0 0;-webkit-text-stroke:0.12px #000;">47540,44</div>
<div class="t" style="left:633.23px;top:718.18px;font-size:9px;color:#000;font-weight:bold;transform:scaleX(0.9000);transform-origin:0 0;-webkit-text-stroke:0.12px #000;">235,27</div>
<div class="t" style="left:690.24px;top:718.18px;font-size:9px;color:#000;font-weight:bold;transform:scaleX(0.9000);transform-origin:0 0;-webkit-text-stroke:0.12px #000;">0,00</div>
<div class="a" style="left:492px;top:714px;width:117px;height:20px;border:2px solid #f01212;border-radius:6px;box-shadow:1px 2px 3px rgba(0,0,0,.22);"></div>
<div class="a" style="left:41px;top:787px;width:226px;height:77px;border:2px solid #f01212;border-radius:7px;box-shadow:1px 2px 4px rgba(0,0,0,.25);"></div>
<div class="a" style="left:49px;top:794px;width:209px;height:61px;border:1px solid #000;"></div>
<div class="a" style="left:49px;top:809px;width:209px;height:1px;background:#000;"></div>
<div class="a" style="left:49px;top:824px;width:209px;height:1px;background:#000;"></div>
<div class="a" style="left:49px;top:839px;width:209px;height:1px;background:#000;"></div>
<div class="a" style="left:130px;top:809px;width:1px;height:45px;background:#000;"></div>
<div class="t" style="left:109.00px;top:797.53px;font-size:10px;color:#000;font-weight:normal;transform:scaleX(1.0585);transform-origin:0 0;">PODSUMOWANIE</div>
<div class="t" style="left:66.60px;top:812.53px;font-size:10px;color:#000;font-weight:normal;transform:scaleX(1.0375);transform-origin:0 0;">Razem netto:</div>
<div class="t" style="left:203.40px;top:812.53px;font-size:10px;color:#000;font-weight:normal;transform:scaleX(1.0391);transform-origin:0 0;">206 932,81</div>
<div class="t" style="left:69.30px;top:827.53px;font-size:10px;color:#000;font-weight:normal;transform:scaleX(1.0909);transform-origin:0 0;">Razem VAT:</div>
<div class="t" style="left:209.40px;top:827.53px;font-size:10px;color:#000;font-weight:normal;transform:scaleX(1.0341);transform-origin:0 0;">47 540,44</div>
<div class="t" style="left:63.30px;top:842.53px;font-size:10px;color:#000;font-weight:normal;transform:scaleX(1.0351);transform-origin:0 0;">Razem brutto:</div>
<div class="t" style="left:203.40px;top:842.53px;font-size:10px;color:#000;font-weight:normal;transform:scaleX(1.0391);transform-origin:0 0;">254 473,25</div>
</body></html>
